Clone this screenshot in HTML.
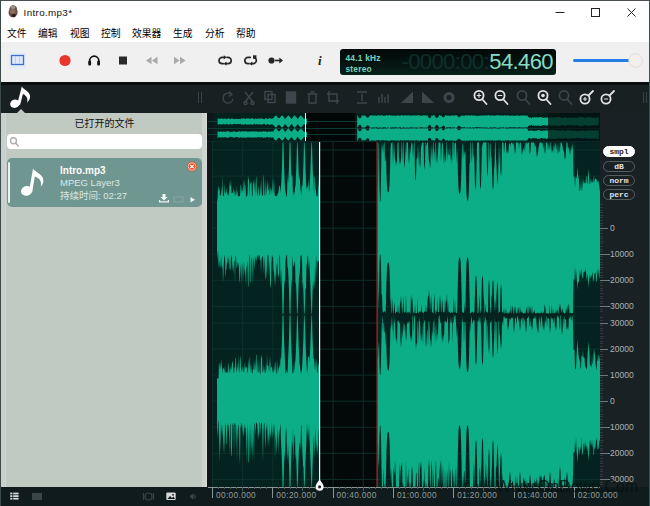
<!DOCTYPE html>
<html lang="zh-CN">
<head>
<meta charset="utf-8">
<title>Intro.mp3*</title>
<style>
*{box-sizing:border-box;margin:0;padding:0}
html,body{width:650px;height:506px;overflow:hidden;background:#fff}
body{position:relative;font-family:"Liberation Sans","Noto Sans CJK SC",sans-serif;font-size:10px;color:#000}
.abs{position:absolute}
#win{position:absolute;left:0;top:0;width:650px;height:506px;overflow:hidden;background:#fff}
#bt{position:absolute;left:0;top:0;width:650px;height:1px;background:#4a4f52;z-index:50}
#bl{position:absolute;left:0;top:0;width:1px;height:506px;background:#3a4a48;z-index:50}
#br{position:absolute;left:649px;top:0;width:1px;height:506px;background:#2c5a58;z-index:50}
#title{position:absolute;left:0;top:1px;width:650px;height:24px;background:#fff}
#title .t{position:absolute;left:23.6px;top:5px;font-size:9.8px;line-height:13px;color:#111;white-space:nowrap;letter-spacing:0.35px}
#menu{position:absolute;left:0;top:25px;width:650px;height:17px;background:#fff}
#menu span{position:absolute;top:2px;font-size:9.8px;line-height:13px;white-space:nowrap;color:#000}
#tb{position:absolute;left:0;top:42px;width:650px;height:40px;background:#f0f0f0}
#dark{position:absolute;left:0;top:82px;width:650px;height:31px;background:#192022}
#panel{position:absolute;left:1px;top:113px;width:207px;height:374px;background:#c1c9c3}
#panel .hd{position:absolute;left:0;top:4px;width:207px;text-align:center;font-size:10px;line-height:13px;color:#111}
#search{position:absolute;left:6px;top:21px;width:195px;height:15px;background:#fff;border-radius:4px}
#item{position:absolute;left:6px;top:45px;width:195px;height:49px;background:#6f9691;border-radius:5px}
#item .bar{position:absolute;left:1px;top:4px;width:2px;height:41px;background:#e8f2ee;border-radius:1px}
#item .n{position:absolute;left:53px;top:7px;font-size:10px;font-weight:bold;color:#fff;line-height:12px;white-space:nowrap}
#item .f{position:absolute;left:53px;top:19px;font-size:9.5px;color:#dce8e4;line-height:12px;white-space:nowrap}
#item .d{position:absolute;left:53px;top:32px;font-size:9.5px;color:#dce8e4;line-height:12px;white-space:nowrap}
#pr{position:absolute;left:202px;top:113px;width:5px;height:374px;background:#cdd3cf;border-right:1px solid #d9ddd9}
#pl{position:absolute;left:1px;top:113px;width:5px;height:374px;background:#c8cfcd;border-right:1px solid #cfd5d2}
#wave{position:absolute;left:207px;top:113px;width:393px;height:374px;background:#04211f}
#right{position:absolute;left:600px;top:113px;width:49px;height:374px;background:#1a2124}
#bot{position:absolute;left:0;top:487px;width:650px;height:19px;background:#0f1b1c}
.sl{position:absolute;left:610px;font-size:8.5px;line-height:11px;color:#aab2b2;white-space:nowrap}
.sl.ng{left:607.2px}
.st{position:absolute;left:600px;width:8px;height:1px;background:#6e7878}
.sm{position:absolute;left:600px;height:1px;background:#2f3a3e}
.tt{position:absolute;top:487px;width:1px;height:11px;background:#8a9696}
.tm{position:absolute;top:487px;width:1px;background:#4a5a5a}
.tl{position:absolute;top:489.5px;font-size:8.3px;line-height:11px;color:#8f9b9b;white-space:nowrap;letter-spacing:0.35px}
.pill{position:absolute;left:603px;width:32px;height:11px;border-radius:6px;border:1px solid #555e60;font-family:"Liberation Mono",monospace;font-size:8px;line-height:9px;text-align:center;color:#e0e4e4;font-weight:bold}
.pill.on{background:#fff;color:#222;border-color:#fff}
#disp{position:absolute;left:340px;top:49px;width:216px;height:26px;border-radius:3px;background:linear-gradient(#020807,#08201a);overflow:hidden}
#disp .a{position:absolute;left:5.5px;top:4px;font-size:8.4px;line-height:10px;font-weight:bold;color:#7ad0b8;white-space:nowrap;letter-spacing:0.2px}
#disp .b{position:absolute;left:5.5px;top:14.5px;font-size:8.4px;line-height:10px;font-weight:bold;color:#7ad0b8;white-space:nowrap;letter-spacing:0.2px}
#disp .dim{position:absolute;right:67px;top:1px;font-size:22px;line-height:24px;color:#0f302a;white-space:nowrap;letter-spacing:-0.6px}
#disp .br{position:absolute;right:3px;top:1px;font-size:22px;line-height:24px;color:#86dcc4;white-space:nowrap;letter-spacing:-0.6px}
#wm{position:absolute;left:496px;top:477px;font-size:16px;line-height:20px;color:#061210;white-space:nowrap;letter-spacing:0;opacity:.8;z-index:40}
svg{position:absolute;left:0;top:0;overflow:visible}
</style>
</head>
<body>
<div id="win">
  <div id="title">
    <svg width="24" height="24" viewBox="0 1 24 24"><path d="M10.800 6.200c.9-1.300 3.600-1.400 4.500-.1 1.200.6 1.900 2 1.700 3.400.8 1.500.9 3.600 0 5.200-.9 1.600-2.700 2.600-4.500 2.600-1.700 0-3.300-1.300-3.700-3-.4-1.500-.3-3.200.5-4.500 0-1.400.5-2.800 1.500-3.600z" fill="#6a5248"/><ellipse cx="13" cy="7.300" rx="2.400" ry="1.600" fill="#9a948e"/><ellipse cx="12.800" cy="11.500" rx="2.600" ry="2.400" fill="#8c6c5c"/><ellipse cx="13.700" cy="15.500" rx="2" ry="1.700" fill="#2a1c18"/></svg>
    <div class="t">Intro.mp3*</div>
    <svg width="650" height="24" viewBox="0 0 650 24"><g stroke="#222" stroke-width="1" fill="none"><path d="M555.500 11.500h9"/><rect x="591.500" y="7.500" width="8" height="8"/><path d="M627.500 7.500l8 8M635.500 7.500l-8 8"/></g></svg>
  </div>
  <div id="menu">
    <span style="left:7px">文件</span><span style="left:38px">编辑</span><span style="left:70px">视图</span><span style="left:101px">控制</span><span style="left:132px">效果器</span><span style="left:173px">生成</span><span style="left:205px">分析</span><span style="left:236px">帮助</span>
  </div>
  <div id="tb">
    <svg width="650" height="40" viewBox="0 42 650 40">
      <rect x="9" y="52" width="17" height="17" fill="#e4ecf8"/>
      <rect x="11.500" y="55.500" width="12" height="9" fill="#dfe9fa" stroke="#3b6fd0" stroke-width="1.300"/><path d="M15.500 56v8M19.500 56v8" stroke="#b9cdf0" stroke-width="1"/>
      <circle cx="65" cy="60.500" r="5.600" fill="#e9352a"/>
      <path d="M89.600 64v-3.200a4.600 4.600 0 0 1 9.200 0V64" fill="none" stroke="#111" stroke-width="1.700"/>
      <rect x="88.300" y="60.800" width="2.800" height="4.600" rx="1" fill="#111"/><rect x="97.200" y="60.800" width="2.800" height="4.600" rx="1" fill="#111"/>
      <rect x="119" y="56.500" width="8" height="8" fill="#2a2a2a"/>
      <path d="M151.500 56.800v7.400l-5.500-3.700zM157.500 56.800v7.400l-5.500-3.700z" fill="#a9a9a9"/>
      <path d="M174 56.800v7.400l5.500-3.700zM180 56.800v7.400l5.500-3.700z" fill="#a9a9a9"/>
      <g fill="none" stroke="#262626" stroke-width="1.700" stroke-linecap="round">
        <path d="M224.500 57.300h-2.300a3.200 3.200 0 0 0 0 6.400h1"/><path d="M225.700 63.700h2.300a3.200 3.200 0 0 0 0-6.400h-1"/>
        <path d="M250.300 57.300h-2.300a3.200 3.200 0 0 0 0 6.400h1"/><path d="M251.500 63.700h2.300a3.200 3.200 0 0 0 .8-6"/>
      </g>
      <path d="M223.800 55.200l2.800 2.100-2.800 2.100zM226.400 61.600l-2.800 2.100 2.800 2.100zM252.200 61.600l-2.800 2.100 2.800 2.100z" fill="#262626"/>
      <rect x="253" y="55.300" width="3.400" height="3.400" fill="#262626"/>
      <circle cx="271.500" cy="60.500" r="3.100" fill="#262626"/><path d="M275 60.500h6.500" stroke="#262626" stroke-width="1.600" fill="none"/><path d="M279.300 57.600l3.700 2.900-3.700 2.900z" fill="#262626"/>
      <path d="M574.500 60.500h55" stroke="#247de6" stroke-width="2.900" stroke-linecap="round"/>
      <circle cx="635.600" cy="60.500" r="6.800" fill="#f3efec" stroke="#e2deda" stroke-width="1"/>
    </svg>
    <div class="abs" style="left:318px;top:11px;font-family:'Liberation Serif',serif;font-style:italic;font-weight:bold;font-size:13px;line-height:15px;color:#222">i</div>
  </div>
  <div id="disp"><div class="a">44.1 kHz</div><div class="b">stereo</div><div class="dim">-0000:00:</div><div class="br">54.460</div></div>

  <div id="dark">
    <svg width="650" height="31" viewBox="0 82 650 31">
      <rect x="0" y="82" width="650" height="3" fill="#080d0d"/>
      <!-- note icon -->
      <g fill="#fff"><ellipse cx="14.900" cy="103.700" rx="4.800" ry="4.100" transform="rotate(-18 14.900 103.700)"/><path d="M21.800 86.400C23.800 89.700 29.600 91 30.100 96C30.300 98.400 29.100 100.600 27.100 102.700C27.900 99.700 27.300 97.200 25.500 95.700C24.500 94.800 23.500 94.300 22.900 94.100L20.100 105L17.300 103.800Z"/></g>
      <path d="M17 113l4-4 4 4z" fill="#c1c9c3"/>
      <g stroke="#3a4448" stroke-width="1"><path d="M198.500 92v11M201.500 92v11M643.500 92v11M646.500 92v11"/></g>
      <g fill="none" stroke="#3d474b" stroke-width="1.400">
        <path d="M231.500 94.500a5 5 0 1 0 1.500 4.500"/><path d="M229 91.500l3 3-3.500 2" />
        <path d="M245 92l8 10M253 92l-8 10"/><circle cx="245.500" cy="103" r="1.500"/><circle cx="252.500" cy="103" r="1.500"/>
        <rect x="265" y="91.500" width="7" height="8"/><rect x="268" y="94.500" width="7" height="8"/>
        <rect x="286.500" y="92" width="9" height="11" fill="#3d474b"/>
        <path d="M307.500 94h10M309 94v9h7v-9M310.500 92h4"/>
        <path d="M329 91v10h10M327 94h10v10"/>
        <path d="M357 92h10M357 103h10M362 94v7"/>
        <path d="M379 103v-6M382 103v-9M385 103v-6M388 103v-9"/>
      </g>
      <path d="M401 103h12V91.500z" fill="#3d474b"/>
      <path d="M422 91.500V103h12z" fill="#3d474b"/>
      <circle cx="449" cy="97.500" r="5.500" fill="#3d474b"/><circle cx="449" cy="97.500" r="2.500" fill="#182024"/>
      <g fill="none" stroke="#e2e2e2" stroke-width="1.800" stroke-linecap="round">
        <circle cx="479" cy="95.500" r="4.600"/><path d="M482.500 99.500l4 4.500"/>
        <circle cx="500" cy="95.500" r="4.600"/><path d="M503.500 99.500l4 4.500"/>
        <circle cx="543" cy="95.500" r="4.600"/><path d="M546.500 99.500l4 4.500"/>
        <circle cx="585" cy="99" r="4.600"/><path d="M588.500 95.500l4.500-4.500"/>
        <circle cx="606" cy="99" r="4.600"/><path d="M609.500 95.500l4.500-4.500"/>
      </g>
      <g fill="none" stroke="#e2e2e2" stroke-width="1.200"><path d="M476.800 95.500h4.400M479 93.300v4.400M497.800 95.500h4.400M583 99h4M604 99h4M585 97v4"/></g>
      <circle cx="543" cy="95.500" r="1.800" fill="#e2e2e2"/>
      <g fill="none" stroke="#3d474b" stroke-width="1.700" stroke-linecap="round">
        <circle cx="522" cy="95.500" r="4.600"/><path d="M525.500 99.500l4 4.500"/>
        <circle cx="564" cy="95.500" r="4.600"/><path d="M567.500 99.500l4 4.500"/>
      </g>
    </svg>
  </div>

  <div id="panel">
    <div class="hd">已打开的文件</div>
    <div id="search"><svg width="20" height="15" viewBox="0 0 20 15"><circle cx="6.500" cy="6.800" r="3" fill="none" stroke="#b0b0b0" stroke-width="1.400"/><path d="M8.800 9.200l2.600 2.800" stroke="#b0b0b0" stroke-width="1.600" stroke-linecap="round"/></svg></div>
    <div id="item">
      <div class="bar"></div>
      <svg width="195" height="50" viewBox="0 1 195 50">
        <g fill="#fff"><ellipse cx="19.600" cy="33.900" rx="5.700" ry="4.800" transform="rotate(-18 19.600 33.900)"/><path d="M26 11.600C28.400 15.600 35.700 16.900 36.300 23C36.600 25.800 35.500 27.700 33.700 29.600C34.500 26.100 33.900 23.300 31.600 21.500C30.200 20.400 28.700 19.700 27.800 19.500L25.200 35L22.100 33.800Z"/></g>
        <circle cx="185" cy="9.500" r="5" fill="#e4552e"/><circle cx="185" cy="9.500" r="3.800" fill="none" stroke="#f6c8b8" stroke-width="0.900"/>
        <path d="M183.300 7.800l3.400 3.400M186.700 7.800l-3.400 3.400" stroke="#fff" stroke-width="1.200"/>
        <g fill="#eef4f2"><path d="M155.500 37h3v3h2l-3.500 3.500-3.500-3.500h2z"/><path d="M152 43v2.500h10V43h-1.200v1.300h-7.600V43z"/></g>
        <rect x="167" y="40" width="9" height="5" fill="none" stroke="#86a8a3" stroke-width="1"/>
        <path d="M183.500 40l4.500 2.800-4.500 2.800z" fill="#eef4f2"/>
      </svg>
      <div class="n">Intro.mp3</div>
      <div class="f">MPEG Layer3</div>
      <div class="d">持续时间: 02:27</div>
    </div>
  </div>
  <div id="pr"></div><div id="pl"></div>

  <div id="wave">
    <svg width="393" height="374" viewBox="207 113 393 374">
      <defs><clipPath id="cm"><rect x="207" y="141" width="393" height="346"/></clipPath>
      <clipPath id="co"><rect x="207" y="113" width="393" height="28"/></clipPath></defs>
      <!-- overview -->
      <rect x="207" y="113" width="393" height="29" fill="#03201d"/><rect x="207" y="113" width="6" height="29" fill="#0c1618"/>
      <rect x="306" y="113" width="49" height="29" fill="#010707"/>
      <rect x="548" y="113" width="52" height="29" fill="#021512"/>
      <g stroke="#0c3a34" stroke-width="1"><path d="M208 121.500h392M208 128.500h392M208 134.500h392"/></g>
      <g clip-path="url(#co)">
        <path d="M217.6,121.5L217.6,119.1L218.3,118.3L218.9,118.4L219.6,118.9L220.2,118.7L220.9,118.7L221.5,118.5L222.2,118.3L222.8,119.1L223.5,119.2L224.1,118.3L224.8,118.7L225.4,118.4L226.1,119.2L226.7,118.7L227.4,118.4L228.1,118.9L228.7,118.2L229.4,118.2L230.0,119.2L230.7,119.2L231.3,118.6L232.0,118.2L232.6,118.8L233.3,119.0L233.9,118.7L234.6,119.2L235.2,119.0L235.9,118.7L236.5,118.7L237.2,118.9L237.8,118.9L238.5,119.0L239.1,118.7L239.8,118.9L240.4,119.2L241.1,118.3L241.8,118.6L242.4,118.5L243.1,119.0L243.7,118.1L244.4,118.3L245.0,119.1L245.7,118.8L246.3,118.4L247.0,118.4L247.6,118.2L248.3,118.7L248.9,118.3L249.6,118.5L250.2,118.9L250.9,118.6L251.5,118.2L252.2,118.3L252.8,118.6L253.5,118.6L254.2,119.2L254.8,118.9L255.5,118.3L256.1,118.7L256.8,119.0L257.4,118.6L258.1,118.4L258.7,118.5L259.4,118.8L260.0,118.7L260.7,118.6L261.3,118.3L262.0,118.6L262.6,118.8L263.3,118.7L263.9,119.2L264.6,119.2L265.2,118.4L265.9,118.1L266.5,118.5L267.2,118.8L267.9,119.0L268.5,118.6L269.2,118.1L269.8,118.4L270.5,118.6L271.1,118.3L271.8,118.9L272.4,118.6L273.1,118.2L273.7,117.6L274.4,116.9L275.0,116.1L275.7,115.4L276.3,115.8L277.0,116.5L277.6,117.3L278.3,118.0L278.9,118.2L279.6,118.0L280.2,117.3L280.9,116.5L281.6,115.8L282.2,115.4L282.9,116.1L283.5,116.9L284.2,117.6L284.8,119.0L285.5,118.6L286.1,117.8L286.8,117.0L287.4,116.2L288.1,115.5L288.7,115.6L289.4,116.4L290.0,117.1L290.7,117.9L291.3,118.9L292.0,119.0L292.6,117.5L293.3,116.7L294.0,116.0L294.6,115.2L295.3,116.0L295.9,116.7L296.6,117.5L297.2,118.5L297.9,119.1L298.5,117.9L299.2,117.1L299.8,116.4L300.5,115.6L301.1,115.5L301.8,116.2L302.4,117.0L303.1,117.8L303.7,119.0L304.4,118.6L305.0,119.0L305.7,118.9L306.4,118.4L307.0,118.7L307.0,121.5L307.0,124.3L306.4,124.6L305.7,124.1L305.0,124.0L304.4,124.4L303.7,124.0L303.1,125.2L302.4,126.0L301.8,126.8L301.1,127.5L300.5,127.4L299.8,126.6L299.2,125.9L298.5,125.1L297.9,123.9L297.2,124.5L296.6,125.5L295.9,126.3L295.3,127.0L294.6,127.8L294.0,127.0L293.3,126.3L292.6,125.5L292.0,124.0L291.3,124.1L290.7,125.1L290.0,125.9L289.4,126.6L288.7,127.4L288.1,127.5L287.4,126.8L286.8,126.0L286.1,125.2L285.5,124.4L284.8,124.0L284.2,125.4L283.5,126.1L282.9,126.9L282.2,127.6L281.6,127.2L280.9,126.5L280.2,125.7L279.6,125.0L278.9,124.8L278.3,125.0L277.6,125.7L277.0,126.5L276.3,127.2L275.7,127.6L275.0,126.9L274.4,126.1L273.7,125.4L273.1,124.8L272.4,124.4L271.8,124.1L271.1,124.7L270.5,124.4L269.8,124.6L269.2,124.9L268.5,124.4L267.9,124.0L267.2,124.2L266.5,124.5L265.9,124.9L265.2,124.6L264.6,123.8L263.9,123.8L263.3,124.3L262.6,124.2L262.0,124.4L261.3,124.7L260.7,124.4L260.0,124.3L259.4,124.2L258.7,124.5L258.1,124.6L257.4,124.4L256.8,124.0L256.1,124.3L255.5,124.7L254.8,124.1L254.2,123.8L253.5,124.4L252.8,124.4L252.2,124.7L251.5,124.8L250.9,124.4L250.2,124.1L249.6,124.5L248.9,124.7L248.3,124.3L247.6,124.8L247.0,124.6L246.3,124.6L245.7,124.2L245.0,123.9L244.4,124.7L243.7,124.9L243.1,124.0L242.4,124.5L241.8,124.4L241.1,124.7L240.4,123.8L239.8,124.1L239.1,124.3L238.5,124.0L237.8,124.1L237.2,124.1L236.5,124.3L235.9,124.3L235.2,124.0L234.6,123.8L233.9,124.3L233.3,124.0L232.6,124.2L232.0,124.8L231.3,124.4L230.7,123.8L230.0,123.8L229.4,124.8L228.7,124.8L228.1,124.1L227.4,124.6L226.7,124.3L226.1,123.8L225.4,124.6L224.8,124.3L224.1,124.7L223.5,123.8L222.8,123.9L222.2,124.7L221.5,124.5L220.9,124.3L220.2,124.3L219.6,124.1L218.9,124.6L218.3,124.7L217.6,123.9Z M357.2,121.5L357.2,115.6L357.9,115.5L358.5,117.5L359.2,118.0L359.9,118.5L360.5,118.0L361.2,117.5L361.8,115.2L362.5,115.5L363.1,115.7L363.8,115.4L364.4,115.2L365.1,115.9L365.7,115.9L366.4,117.0L367.0,117.5L367.7,118.0L368.3,117.5L369.0,117.0L369.6,115.5L370.3,115.7L370.9,115.1L371.6,115.3L372.3,115.5L372.9,115.7L373.6,115.4L374.2,115.6L374.9,115.4L375.5,115.6L376.2,115.4L376.8,115.9L377.5,115.7L378.1,115.1L378.8,115.2L379.4,115.7L380.1,115.2L380.7,115.7L381.4,115.1L382.0,115.3L382.7,115.6L383.3,115.7L384.0,115.9L384.6,115.2L385.3,115.9L386.0,115.2L386.6,115.1L387.3,115.4L387.9,115.8L388.6,115.2L389.2,115.1L389.9,115.3L390.5,115.5L391.2,115.6L391.8,115.6L392.5,115.7L393.1,115.4L393.8,115.6L394.4,115.7L395.1,115.8L395.7,115.4L396.4,115.7L397.0,115.5L397.7,115.6L398.4,115.2L399.0,115.2L399.7,115.9L400.3,115.7L401.0,115.6L401.6,115.1L402.3,115.3L402.9,115.6L403.6,115.7L404.2,115.4L404.9,115.2L405.5,115.2L406.2,115.6L406.8,115.2L407.5,115.4L408.1,115.5L408.8,115.1L409.4,115.7L410.1,115.3L410.8,115.8L411.4,115.8L412.1,115.2L412.7,115.7L413.4,115.3L414.0,115.4L414.7,115.2L415.3,115.6L416.0,115.6L416.6,115.7L417.3,115.2L417.9,115.4L418.6,115.1L419.2,115.2L419.9,115.8L420.5,115.5L421.2,115.8L421.8,115.9L422.5,115.8L423.1,115.2L423.8,115.3L424.5,115.2L425.1,115.6L425.8,115.4L426.4,115.3L427.1,115.6L427.7,115.4L428.4,117.4L429.0,117.9L429.7,118.2L430.3,117.7L431.0,117.2L431.6,115.2L432.3,115.5L432.9,115.7L433.6,115.3L434.2,115.2L434.9,115.9L435.5,117.3L436.2,117.8L436.9,118.3L437.5,117.8L438.2,117.3L438.8,115.7L439.5,115.1L440.1,115.6L440.8,115.8L441.4,115.8L442.1,116.5L442.7,117.0L443.4,117.5L444.0,117.0L444.7,116.5L445.3,115.1L446.0,115.2L446.6,115.7L447.3,115.7L447.9,115.5L448.6,115.8L449.2,115.4L449.9,115.9L450.6,115.9L451.2,115.1L451.9,115.7L452.5,115.4L453.2,115.5L453.8,115.6L454.5,115.8L455.1,115.2L455.8,115.1L456.4,115.1L457.1,115.8L457.7,116.5L458.4,117.0L459.0,117.5L459.7,117.0L460.3,116.5L461.0,115.4L461.6,115.7L462.3,115.5L462.9,115.7L463.6,115.7L464.3,115.8L464.9,115.7L465.6,115.1L466.2,115.5L466.9,115.4L467.5,115.4L468.2,115.1L468.8,115.6L469.5,115.7L470.1,115.6L470.8,115.6L471.4,115.2L472.1,115.2L472.7,115.7L473.4,115.6L474.0,115.5L474.7,115.4L475.3,115.4L476.0,115.7L476.7,115.9L477.3,115.7L478.0,115.8L478.6,115.5L479.3,115.8L479.9,115.8L480.6,115.4L481.2,115.7L481.9,115.3L482.5,115.5L483.2,115.2L483.8,115.8L484.5,115.5L485.1,115.3L485.8,115.8L486.4,115.1L487.1,115.8L487.7,115.3L488.4,115.1L489.1,115.2L489.7,115.6L490.4,115.8L491.0,115.5L491.7,115.2L492.3,115.7L493.0,115.2L493.6,115.8L494.3,115.2L494.9,115.9L495.6,115.6L496.2,115.2L496.9,115.3L497.5,115.2L498.2,115.2L498.8,115.3L499.5,115.3L500.1,115.8L500.8,115.6L501.4,115.8L502.1,115.3L502.8,115.4L503.4,115.7L504.1,115.8L504.7,115.1L505.4,115.3L506.0,115.5L506.7,115.5L507.3,115.2L508.0,115.5L508.6,115.6L509.3,115.6L509.9,115.7L510.6,115.9L511.2,115.4L511.9,115.6L512.5,115.4L513.2,115.9L513.8,115.6L514.5,115.8L515.1,115.8L515.8,115.7L516.5,115.2L517.1,115.6L517.8,115.6L518.4,115.4L519.1,115.7L519.7,115.9L520.4,115.5L521.0,115.5L521.7,115.4L522.3,115.5L523.0,115.4L523.6,115.3L524.3,115.7L524.9,115.5L525.6,115.5L526.2,115.7L526.9,115.6L527.5,115.5L528.2,116.9L528.9,116.9L529.5,117.9L530.2,117.3L530.8,118.2L531.5,118.2L532.1,117.5L532.8,117.0L533.4,118.1L534.1,117.2L534.7,117.0L535.4,117.8L536.0,117.3L536.7,117.0L537.3,117.7L538.0,117.2L538.6,117.2L539.3,117.4L539.9,117.0L540.6,117.0L541.2,116.9L541.9,117.4L542.6,118.0L543.2,117.9L543.9,118.0L544.5,117.4L545.2,117.2L545.8,118.2L546.5,117.3L547.1,117.2L547.8,117.8L548.4,117.5L549.1,118.1L549.7,117.2L550.4,118.2L551.0,116.8L551.7,117.1L552.3,117.4L553.0,117.9L553.6,116.9L554.3,116.9L555.0,118.1L555.6,117.1L556.3,117.0L556.9,117.3L557.6,117.2L558.2,117.6L558.9,116.9L559.5,116.8L560.2,117.7L560.8,117.1L561.5,117.7L562.1,118.1L562.8,117.8L563.4,118.1L564.1,116.9L564.7,116.9L565.4,118.1L566.0,117.4L566.7,117.7L567.3,118.1L568.0,117.9L568.7,117.9L569.3,117.2L570.0,118.3L570.6,118.0L571.3,117.6L571.9,118.3L572.6,117.4L573.2,117.4L573.9,117.0L574.5,118.0L575.2,117.9L575.8,117.5L576.5,117.9L577.1,117.4L577.8,117.9L578.4,117.3L579.1,117.1L579.7,117.1L580.4,116.8L581.1,117.5L581.7,117.6L582.4,117.0L583.0,117.1L583.7,117.4L584.3,117.7L585.0,117.9L585.6,118.1L586.3,117.1L586.9,118.1L587.6,117.2L588.2,117.5L588.9,116.9L589.5,117.2L590.2,116.8L590.8,118.1L591.5,117.5L592.1,117.4L592.8,117.8L593.5,117.5L594.1,117.8L594.8,117.5L595.4,118.3L596.1,117.6L596.7,117.6L597.4,117.8L598.0,117.7L598.7,117.1L598.7,121.5L598.7,125.9L598.0,125.3L597.4,125.2L596.7,125.4L596.1,125.4L595.4,124.7L594.8,125.5L594.1,125.2L593.5,125.5L592.8,125.2L592.1,125.6L591.5,125.5L590.8,124.9L590.2,126.2L589.5,125.8L588.9,126.1L588.2,125.5L587.6,125.8L586.9,124.9L586.3,125.9L585.6,124.9L585.0,125.1L584.3,125.3L583.7,125.6L583.0,125.9L582.4,126.0L581.7,125.4L581.1,125.5L580.4,126.2L579.7,125.9L579.1,125.9L578.4,125.7L577.8,125.1L577.1,125.6L576.5,125.1L575.8,125.5L575.2,125.1L574.5,125.0L573.9,126.0L573.2,125.6L572.6,125.6L571.9,124.7L571.3,125.4L570.6,125.0L570.0,124.7L569.3,125.8L568.7,125.1L568.0,125.1L567.3,124.9L566.7,125.3L566.0,125.6L565.4,124.9L564.7,126.1L564.1,126.1L563.4,124.9L562.8,125.2L562.1,124.9L561.5,125.3L560.8,125.9L560.2,125.3L559.5,126.2L558.9,126.1L558.2,125.4L557.6,125.8L556.9,125.7L556.3,126.0L555.6,125.9L555.0,124.9L554.3,126.1L553.6,126.1L553.0,125.1L552.3,125.6L551.7,125.9L551.0,126.2L550.4,124.8L549.7,125.8L549.1,124.9L548.4,125.5L547.8,125.2L547.1,125.8L546.5,125.7L545.8,124.8L545.2,125.8L544.5,125.6L543.9,125.0L543.2,125.1L542.6,125.0L541.9,125.6L541.2,126.1L540.6,126.0L539.9,126.0L539.3,125.6L538.6,125.8L538.0,125.8L537.3,125.3L536.7,126.0L536.0,125.7L535.4,125.2L534.7,126.0L534.1,125.8L533.4,124.9L532.8,126.0L532.1,125.5L531.5,124.8L530.8,124.8L530.2,125.7L529.5,125.1L528.9,126.1L528.2,126.1L527.5,127.5L526.9,127.4L526.2,127.3L525.6,127.5L524.9,127.5L524.3,127.3L523.6,127.7L523.0,127.6L522.3,127.5L521.7,127.6L521.0,127.5L520.4,127.5L519.7,127.1L519.1,127.3L518.4,127.6L517.8,127.4L517.1,127.4L516.5,127.8L515.8,127.3L515.1,127.2L514.5,127.2L513.8,127.4L513.2,127.1L512.5,127.6L511.9,127.4L511.2,127.6L510.6,127.1L509.9,127.3L509.3,127.4L508.6,127.4L508.0,127.5L507.3,127.8L506.7,127.5L506.0,127.5L505.4,127.7L504.7,127.9L504.1,127.2L503.4,127.3L502.8,127.6L502.1,127.7L501.4,127.2L500.8,127.4L500.1,127.2L499.5,127.7L498.8,127.7L498.2,127.8L497.5,127.8L496.9,127.7L496.2,127.8L495.6,127.4L494.9,127.1L494.3,127.8L493.6,127.2L493.0,127.8L492.3,127.3L491.7,127.8L491.0,127.5L490.4,127.2L489.7,127.4L489.1,127.8L488.4,127.9L487.7,127.7L487.1,127.2L486.4,127.9L485.8,127.2L485.1,127.7L484.5,127.5L483.8,127.2L483.2,127.8L482.5,127.5L481.9,127.7L481.2,127.3L480.6,127.6L479.9,127.2L479.3,127.2L478.6,127.5L478.0,127.2L477.3,127.3L476.7,127.1L476.0,127.3L475.3,127.6L474.7,127.6L474.0,127.5L473.4,127.4L472.7,127.3L472.1,127.8L471.4,127.8L470.8,127.4L470.1,127.4L469.5,127.3L468.8,127.4L468.2,127.9L467.5,127.6L466.9,127.6L466.2,127.5L465.6,127.9L464.9,127.3L464.3,127.2L463.6,127.3L462.9,127.3L462.3,127.5L461.6,127.3L461.0,127.6L460.3,126.5L459.7,126.0L459.0,125.5L458.4,126.0L457.7,126.5L457.1,127.2L456.4,127.9L455.8,127.9L455.1,127.8L454.5,127.2L453.8,127.4L453.2,127.5L452.5,127.6L451.9,127.3L451.2,127.9L450.6,127.1L449.9,127.1L449.2,127.6L448.6,127.2L447.9,127.5L447.3,127.3L446.6,127.3L446.0,127.8L445.3,127.9L444.7,126.5L444.0,126.0L443.4,125.5L442.7,126.0L442.1,126.5L441.4,127.2L440.8,127.2L440.1,127.4L439.5,127.9L438.8,127.3L438.2,125.7L437.5,125.2L436.9,124.7L436.2,125.2L435.5,125.7L434.9,127.1L434.2,127.8L433.6,127.7L432.9,127.3L432.3,127.5L431.6,127.8L431.0,125.8L430.3,125.3L429.7,124.8L429.0,125.1L428.4,125.6L427.7,127.6L427.1,127.4L426.4,127.7L425.8,127.6L425.1,127.4L424.5,127.8L423.8,127.7L423.1,127.8L422.5,127.2L421.8,127.1L421.2,127.2L420.5,127.5L419.9,127.2L419.2,127.8L418.6,127.9L417.9,127.6L417.3,127.8L416.6,127.3L416.0,127.4L415.3,127.4L414.7,127.8L414.0,127.6L413.4,127.7L412.7,127.3L412.1,127.8L411.4,127.2L410.8,127.2L410.1,127.7L409.4,127.3L408.8,127.9L408.1,127.5L407.5,127.6L406.8,127.8L406.2,127.4L405.5,127.8L404.9,127.8L404.2,127.6L403.6,127.3L402.9,127.4L402.3,127.7L401.6,127.9L401.0,127.4L400.3,127.3L399.7,127.1L399.0,127.8L398.4,127.8L397.7,127.4L397.0,127.5L396.4,127.3L395.7,127.6L395.1,127.2L394.4,127.3L393.8,127.4L393.1,127.6L392.5,127.3L391.8,127.4L391.2,127.4L390.5,127.5L389.9,127.7L389.2,127.9L388.6,127.8L387.9,127.2L387.3,127.6L386.6,127.9L386.0,127.8L385.3,127.1L384.6,127.8L384.0,127.1L383.3,127.3L382.7,127.4L382.0,127.7L381.4,127.9L380.7,127.3L380.1,127.8L379.4,127.3L378.8,127.8L378.1,127.9L377.5,127.3L376.8,127.1L376.2,127.6L375.5,127.4L374.9,127.6L374.2,127.4L373.6,127.6L372.9,127.3L372.3,127.5L371.6,127.7L370.9,127.9L370.3,127.3L369.6,127.5L369.0,126.0L368.3,125.5L367.7,125.0L367.0,125.5L366.4,126.0L365.7,127.1L365.1,127.1L364.4,127.8L363.8,127.6L363.1,127.3L362.5,127.5L361.8,127.8L361.2,125.5L360.5,125.0L359.9,124.5L359.2,125.0L358.5,125.5L357.9,127.5L357.2,127.4Z" fill="#0bae87"/><path d="M217.6,134.5L217.6,131.1L218.3,131.2L218.9,132.1L219.6,132.1L220.2,131.3L220.9,131.4L221.5,131.5L222.2,131.9L222.8,131.5L223.5,131.5L224.1,131.6L224.8,132.0L225.4,131.7L226.1,131.8L226.7,131.4L227.4,131.1L228.1,131.2L228.7,131.6L229.4,131.7L230.0,131.9L230.7,132.2L231.3,132.2L232.0,131.7L232.6,131.8L233.3,131.8L233.9,131.2L234.6,131.6L235.2,131.6L235.9,131.9L236.5,132.2L237.2,131.8L237.8,132.0L238.5,131.6L239.1,131.1L239.8,131.5L240.4,132.0L241.1,131.2L241.8,131.3L242.4,131.4L243.1,131.2L243.7,131.4L244.4,131.3L245.0,131.8L245.7,131.1L246.3,131.1L247.0,132.0L247.6,131.4L248.3,131.4L248.9,131.7L249.6,131.6L250.2,131.7L250.9,131.2L251.5,131.6L252.2,131.3L252.8,131.8L253.5,131.2L254.2,131.2L254.8,131.7L255.5,131.6L256.1,131.2L256.8,131.4L257.4,131.7L258.1,132.0L258.7,131.8L259.4,131.4L260.0,132.0L260.7,131.2L261.3,131.9L262.0,131.2L262.6,131.9L263.3,131.1L263.9,131.4L264.6,131.6L265.2,131.6L265.9,131.5L266.5,131.6L267.2,131.9L267.9,132.0L268.5,131.6L269.2,131.2L269.8,131.5L270.5,132.1L271.1,131.3L271.8,131.4L272.4,131.2L273.1,132.0L273.7,130.6L274.4,129.8L275.0,129.1L275.7,128.3L276.3,128.8L277.0,129.6L277.6,130.3L278.3,131.1L278.9,131.3L279.6,131.1L280.2,130.3L280.9,129.6L281.6,128.8L282.2,128.3L282.9,129.1L283.5,129.8L284.2,130.6L284.8,131.5L285.5,132.1L286.1,130.8L286.8,130.0L287.4,129.2L288.1,128.5L288.7,128.7L289.4,129.4L290.0,130.2L290.7,130.9L291.3,131.4L292.0,131.8L292.6,130.4L293.3,129.7L294.0,128.9L294.6,128.2L295.3,128.9L295.9,129.7L296.6,130.4L297.2,132.1L297.9,131.8L298.5,130.9L299.2,130.2L299.8,129.4L300.5,128.7L301.1,128.5L301.8,129.2L302.4,130.0L303.1,130.8L303.7,131.7L304.4,132.0L305.0,131.5L305.7,131.9L306.4,132.1L307.0,131.7L307.0,134.5L307.0,137.3L306.4,136.9L305.7,137.1L305.0,137.5L304.4,137.0L303.7,137.3L303.1,138.2L302.4,139.0L301.8,139.8L301.1,140.5L300.5,140.3L299.8,139.6L299.2,138.8L298.5,138.1L297.9,137.2L297.2,136.9L296.6,138.6L295.9,139.3L295.3,140.1L294.6,140.8L294.0,140.1L293.3,139.3L292.6,138.6L292.0,137.2L291.3,137.6L290.7,138.1L290.0,138.8L289.4,139.6L288.7,140.3L288.1,140.5L287.4,139.8L286.8,139.0L286.1,138.2L285.5,136.9L284.8,137.5L284.2,138.4L283.5,139.2L282.9,139.9L282.2,140.7L281.6,140.2L280.9,139.4L280.2,138.7L279.6,137.9L278.9,137.7L278.3,137.9L277.6,138.7L277.0,139.4L276.3,140.2L275.7,140.7L275.0,139.9L274.4,139.2L273.7,138.4L273.1,137.0L272.4,137.8L271.8,137.6L271.1,137.7L270.5,136.9L269.8,137.5L269.2,137.8L268.5,137.4L267.9,137.0L267.2,137.1L266.5,137.4L265.9,137.5L265.2,137.4L264.6,137.4L263.9,137.6L263.3,137.9L262.6,137.1L262.0,137.8L261.3,137.1L260.7,137.8L260.0,137.0L259.4,137.6L258.7,137.2L258.1,137.0L257.4,137.3L256.8,137.6L256.1,137.8L255.5,137.4L254.8,137.3L254.2,137.8L253.5,137.8L252.8,137.2L252.2,137.7L251.5,137.4L250.9,137.8L250.2,137.3L249.6,137.4L248.9,137.3L248.3,137.6L247.6,137.6L247.0,137.0L246.3,137.9L245.7,137.9L245.0,137.2L244.4,137.7L243.7,137.6L243.1,137.8L242.4,137.6L241.8,137.7L241.1,137.8L240.4,137.0L239.8,137.5L239.1,137.9L238.5,137.4L237.8,137.0L237.2,137.2L236.5,136.8L235.9,137.1L235.2,137.4L234.6,137.4L233.9,137.8L233.3,137.2L232.6,137.2L232.0,137.3L231.3,136.8L230.7,136.8L230.0,137.1L229.4,137.3L228.7,137.4L228.1,137.8L227.4,137.9L226.7,137.6L226.1,137.2L225.4,137.3L224.8,137.0L224.1,137.4L223.5,137.5L222.8,137.5L222.2,137.1L221.5,137.5L220.9,137.6L220.2,137.7L219.6,136.9L218.9,136.9L218.3,137.8L217.6,137.9Z M357.2,134.5L357.2,128.2L357.9,128.8L358.5,130.5L359.2,131.0L359.9,131.5L360.5,131.0L361.2,130.5L361.8,128.7L362.5,128.4L363.1,128.6L363.8,128.9L364.4,128.5L365.1,128.8L365.7,128.9L366.4,130.0L367.0,130.5L367.7,131.0L368.3,130.5L369.0,130.0L369.6,128.1L370.3,128.2L370.9,128.1L371.6,128.7L372.3,128.5L372.9,128.7L373.6,128.4L374.2,128.4L374.9,128.3L375.5,128.3L376.2,128.7L376.8,128.6L377.5,128.5L378.1,128.9L378.8,128.9L379.4,128.6L380.1,128.8L380.7,128.3L381.4,128.7L382.0,128.8L382.7,128.8L383.3,128.7L384.0,128.7L384.6,128.5L385.3,128.5L386.0,128.7L386.6,128.4L387.3,128.7L387.9,128.2L388.6,128.1L389.2,128.3L389.9,128.6L390.5,128.5L391.2,128.4L391.8,128.9L392.5,128.6L393.1,128.5L393.8,128.8L394.4,128.8L395.1,128.3L395.7,128.6L396.4,128.5L397.0,128.2L397.7,128.4L398.4,128.7L399.0,128.1L399.7,128.6L400.3,128.9L401.0,128.4L401.6,128.8L402.3,128.7L402.9,128.2L403.6,128.4L404.2,128.9L404.9,128.5L405.5,128.6L406.2,128.5L406.8,128.7L407.5,128.4L408.1,128.8L408.8,128.7L409.4,128.6L410.1,128.2L410.8,128.8L411.4,128.3L412.1,128.7L412.7,128.4L413.4,128.6L414.0,128.5L414.7,128.3L415.3,128.6L416.0,128.8L416.6,128.8L417.3,128.8L417.9,128.2L418.6,128.4L419.2,128.1L419.9,128.3L420.5,128.9L421.2,128.4L421.8,128.3L422.5,128.3L423.1,128.5L423.8,128.6L424.5,128.5L425.1,128.3L425.8,128.7L426.4,128.5L427.1,128.5L427.7,128.1L428.4,130.4L429.0,130.9L429.7,131.2L430.3,130.7L431.0,130.2L431.6,128.5L432.3,128.7L432.9,128.6L433.6,128.4L434.2,128.2L434.9,128.4L435.5,130.3L436.2,130.8L436.9,131.3L437.5,130.8L438.2,130.3L438.8,128.6L439.5,128.8L440.1,128.8L440.8,128.2L441.4,128.1L442.1,129.5L442.7,130.0L443.4,130.5L444.0,130.0L444.7,129.5L445.3,128.4L446.0,128.5L446.6,128.5L447.3,128.8L447.9,128.5L448.6,128.1L449.2,128.3L449.9,128.8L450.6,128.5L451.2,128.3L451.9,128.7L452.5,128.2L453.2,128.5L453.8,128.3L454.5,128.6L455.1,128.1L455.8,128.3L456.4,128.4L457.1,128.8L457.7,129.5L458.4,130.0L459.0,130.5L459.7,130.0L460.3,129.5L461.0,128.5L461.6,128.5L462.3,128.6L462.9,128.3L463.6,128.2L464.3,128.3L464.9,128.5L465.6,128.1L466.2,128.6L466.9,128.3L467.5,128.4L468.2,128.3L468.8,128.2L469.5,128.7L470.1,128.4L470.8,128.6L471.4,128.4L472.1,128.1L472.7,128.4L473.4,128.9L474.0,128.5L474.7,128.3L475.3,128.2L476.0,128.4L476.7,128.2L477.3,128.9L478.0,128.1L478.6,128.3L479.3,128.4L479.9,128.2L480.6,128.2L481.2,128.8L481.9,128.2L482.5,128.3L483.2,128.7L483.8,128.3L484.5,128.4L485.1,128.7L485.8,128.3L486.4,128.8L487.1,128.4L487.7,128.6L488.4,128.7L489.1,128.4L489.7,128.5L490.4,128.7L491.0,128.1L491.7,128.8L492.3,128.9L493.0,128.5L493.6,128.2L494.3,128.4L494.9,128.3L495.6,128.5L496.2,128.4L496.9,128.6L497.5,128.7L498.2,128.5L498.8,128.9L499.5,128.8L500.1,128.3L500.8,128.8L501.4,128.3L502.1,128.3L502.8,128.6L503.4,128.4L504.1,128.3L504.7,128.2L505.4,128.8L506.0,128.8L506.7,128.6L507.3,128.5L508.0,128.7L508.6,128.9L509.3,128.5L509.9,128.1L510.6,128.6L511.2,128.5L511.9,128.6L512.5,128.5L513.2,128.2L513.8,128.7L514.5,128.4L515.1,128.5L515.8,128.5L516.5,128.2L517.1,128.8L517.8,128.2L518.4,128.7L519.1,128.4L519.7,128.3L520.4,128.4L521.0,128.6L521.7,128.2L522.3,128.8L523.0,128.4L523.6,128.6L524.3,128.5L524.9,128.2L525.6,128.3L526.2,128.4L526.9,128.7L527.5,128.7L528.2,130.6L528.9,131.0L529.5,130.9L530.2,129.9L530.8,131.1L531.5,130.1L532.1,130.7L532.8,130.8L533.4,130.8L534.1,131.2L534.7,130.6L535.4,131.1L536.0,130.6L536.7,130.9L537.3,130.0L538.0,129.9L538.6,130.6L539.3,130.3L539.9,129.9L540.6,130.8L541.2,131.2L541.9,130.9L542.6,131.0L543.2,130.3L543.9,130.7L544.5,130.8L545.2,130.1L545.8,131.0L546.5,130.1L547.1,130.4L547.8,130.7L548.4,130.1L549.1,130.8L549.7,130.0L550.4,129.9L551.0,130.5L551.7,130.3L552.3,129.9L553.0,130.2L553.6,130.2L554.3,130.0L555.0,129.9L555.6,130.2L556.3,129.8L556.9,130.9L557.6,130.4L558.2,130.3L558.9,130.7L559.5,130.7L560.2,131.0L560.8,129.9L561.5,130.8L562.1,130.6L562.8,130.0L563.4,131.0L564.1,129.9L564.7,131.1L565.4,131.3L566.0,130.8L566.7,130.8L567.3,129.9L568.0,130.0L568.7,130.2L569.3,130.6L570.0,130.5L570.6,130.9L571.3,130.0L571.9,130.7L572.6,130.9L573.2,130.3L573.9,131.1L574.5,130.8L575.2,129.9L575.8,131.2L576.5,131.1L577.1,131.0L577.8,130.9L578.4,130.7L579.1,130.9L579.7,130.8L580.4,130.9L581.1,130.9L581.7,130.4L582.4,130.8L583.0,130.7L583.7,130.1L584.3,131.2L585.0,131.1L585.6,130.0L586.3,130.7L586.9,130.1L587.6,131.1L588.2,130.5L588.9,130.0L589.5,130.8L590.2,130.1L590.8,130.4L591.5,130.7L592.1,129.8L592.8,130.7L593.5,130.6L594.1,130.4L594.8,130.8L595.4,130.0L596.1,130.4L596.7,130.4L597.4,130.5L598.0,129.8L598.7,129.8L598.7,134.5L598.7,139.2L598.0,139.2L597.4,138.5L596.7,138.6L596.1,138.6L595.4,139.0L594.8,138.2L594.1,138.6L593.5,138.4L592.8,138.3L592.1,139.2L591.5,138.3L590.8,138.6L590.2,138.9L589.5,138.2L588.9,139.0L588.2,138.5L587.6,137.9L586.9,138.9L586.3,138.3L585.6,139.0L585.0,137.9L584.3,137.8L583.7,138.9L583.0,138.3L582.4,138.2L581.7,138.6L581.1,138.1L580.4,138.1L579.7,138.2L579.1,138.1L578.4,138.3L577.8,138.1L577.1,138.0L576.5,137.9L575.8,137.8L575.2,139.1L574.5,138.2L573.9,137.9L573.2,138.7L572.6,138.1L571.9,138.3L571.3,139.0L570.6,138.1L570.0,138.5L569.3,138.4L568.7,138.8L568.0,139.0L567.3,139.1L566.7,138.2L566.0,138.2L565.4,137.7L564.7,137.9L564.1,139.1L563.4,138.0L562.8,139.0L562.1,138.4L561.5,138.2L560.8,139.1L560.2,138.0L559.5,138.3L558.9,138.3L558.2,138.7L557.6,138.6L556.9,138.1L556.3,139.2L555.6,138.8L555.0,139.1L554.3,139.0L553.6,138.8L553.0,138.8L552.3,139.1L551.7,138.7L551.0,138.5L550.4,139.1L549.7,139.0L549.1,138.2L548.4,138.9L547.8,138.3L547.1,138.6L546.5,138.9L545.8,138.0L545.2,138.9L544.5,138.2L543.9,138.3L543.2,138.7L542.6,138.0L541.9,138.1L541.2,137.8L540.6,138.2L539.9,139.1L539.3,138.7L538.6,138.4L538.0,139.1L537.3,139.0L536.7,138.1L536.0,138.4L535.4,137.9L534.7,138.4L534.1,137.8L533.4,138.2L532.8,138.2L532.1,138.3L531.5,138.9L530.8,137.9L530.2,139.1L529.5,138.1L528.9,138.0L528.2,138.4L527.5,140.3L526.9,140.3L526.2,140.6L525.6,140.7L524.9,140.8L524.3,140.5L523.6,140.4L523.0,140.6L522.3,140.2L521.7,140.8L521.0,140.4L520.4,140.6L519.7,140.7L519.1,140.6L518.4,140.3L517.8,140.8L517.1,140.2L516.5,140.8L515.8,140.5L515.1,140.5L514.5,140.6L513.8,140.3L513.2,140.8L512.5,140.5L511.9,140.4L511.2,140.5L510.6,140.4L509.9,140.9L509.3,140.5L508.6,140.1L508.0,140.3L507.3,140.5L506.7,140.4L506.0,140.2L505.4,140.2L504.7,140.8L504.1,140.7L503.4,140.6L502.8,140.4L502.1,140.7L501.4,140.7L500.8,140.2L500.1,140.7L499.5,140.2L498.8,140.1L498.2,140.5L497.5,140.3L496.9,140.4L496.2,140.6L495.6,140.5L494.9,140.7L494.3,140.6L493.6,140.8L493.0,140.5L492.3,140.1L491.7,140.2L491.0,140.9L490.4,140.3L489.7,140.5L489.1,140.6L488.4,140.3L487.7,140.4L487.1,140.6L486.4,140.2L485.8,140.7L485.1,140.3L484.5,140.6L483.8,140.7L483.2,140.3L482.5,140.7L481.9,140.8L481.2,140.2L480.6,140.8L479.9,140.8L479.3,140.6L478.6,140.7L478.0,140.9L477.3,140.1L476.7,140.8L476.0,140.6L475.3,140.8L474.7,140.7L474.0,140.5L473.4,140.1L472.7,140.6L472.1,140.9L471.4,140.6L470.8,140.4L470.1,140.6L469.5,140.3L468.8,140.8L468.2,140.7L467.5,140.6L466.9,140.7L466.2,140.4L465.6,140.9L464.9,140.5L464.3,140.7L463.6,140.8L462.9,140.7L462.3,140.4L461.6,140.5L461.0,140.5L460.3,139.5L459.7,139.0L459.0,138.5L458.4,139.0L457.7,139.5L457.1,140.2L456.4,140.6L455.8,140.7L455.1,140.9L454.5,140.4L453.8,140.7L453.2,140.5L452.5,140.8L451.9,140.3L451.2,140.7L450.6,140.5L449.9,140.2L449.2,140.7L448.6,140.9L447.9,140.5L447.3,140.2L446.6,140.5L446.0,140.5L445.3,140.6L444.7,139.5L444.0,139.0L443.4,138.5L442.7,139.0L442.1,139.5L441.4,140.9L440.8,140.8L440.1,140.2L439.5,140.2L438.8,140.4L438.2,138.7L437.5,138.2L436.9,137.7L436.2,138.2L435.5,138.7L434.9,140.6L434.2,140.8L433.6,140.6L432.9,140.4L432.3,140.3L431.6,140.5L431.0,138.8L430.3,138.3L429.7,137.8L429.0,138.1L428.4,138.6L427.7,140.9L427.1,140.5L426.4,140.5L425.8,140.3L425.1,140.7L424.5,140.5L423.8,140.4L423.1,140.5L422.5,140.7L421.8,140.7L421.2,140.6L420.5,140.1L419.9,140.7L419.2,140.9L418.6,140.6L417.9,140.8L417.3,140.2L416.6,140.2L416.0,140.2L415.3,140.4L414.7,140.7L414.0,140.5L413.4,140.4L412.7,140.6L412.1,140.3L411.4,140.7L410.8,140.2L410.1,140.8L409.4,140.4L408.8,140.3L408.1,140.2L407.5,140.6L406.8,140.3L406.2,140.5L405.5,140.4L404.9,140.5L404.2,140.1L403.6,140.6L402.9,140.8L402.3,140.3L401.6,140.2L401.0,140.6L400.3,140.1L399.7,140.4L399.0,140.9L398.4,140.3L397.7,140.6L397.0,140.8L396.4,140.5L395.7,140.4L395.1,140.7L394.4,140.2L393.8,140.2L393.1,140.5L392.5,140.4L391.8,140.1L391.2,140.6L390.5,140.5L389.9,140.4L389.2,140.7L388.6,140.9L387.9,140.8L387.3,140.3L386.6,140.6L386.0,140.3L385.3,140.5L384.6,140.5L384.0,140.3L383.3,140.3L382.7,140.2L382.0,140.2L381.4,140.3L380.7,140.7L380.1,140.2L379.4,140.4L378.8,140.1L378.1,140.1L377.5,140.5L376.8,140.4L376.2,140.3L375.5,140.7L374.9,140.7L374.2,140.6L373.6,140.6L372.9,140.3L372.3,140.5L371.6,140.3L370.9,140.9L370.3,140.8L369.6,140.9L369.0,139.0L368.3,138.5L367.7,138.0L367.0,138.5L366.4,139.0L365.7,140.1L365.1,140.2L364.4,140.5L363.8,140.1L363.1,140.4L362.5,140.6L361.8,140.3L361.2,138.5L360.5,138.0L359.9,137.5L359.2,138.0L358.5,138.5L357.9,140.2L357.2,140.8Z" fill="#0bae87"/>
        <rect x="548" y="113" width="52" height="29" fill="#021512" opacity="0.720"/>
      </g>
      <rect x="305" y="113" width="1" height="29" fill="#e8f0ee"/>
      <rect x="207" y="141" width="393" height="1" fill="#0a2a28"/>
      <!-- main -->
      <rect x="207" y="142" width="393" height="345" fill="#04221f"/>
      <rect x="207" y="142" width="6" height="345" fill="#0d1719"/>
      <rect x="320" y="142" width="57" height="345" fill="#020908"/>
      <g clip-path="url(#cm)">
        <g stroke="#0f3631" stroke-width="1" opacity="0.850"><line x1="212.5" y1="141" x2="212.5" y2="487"/><line x1="242.7" y1="141" x2="242.7" y2="487"/><line x1="272.8" y1="141" x2="272.8" y2="487"/><line x1="302.9" y1="141" x2="302.9" y2="487"/><line x1="333.1" y1="141" x2="333.1" y2="487"/><line x1="363.2" y1="141" x2="363.2" y2="487"/><line x1="393.4" y1="141" x2="393.4" y2="487"/><line x1="423.5" y1="141" x2="423.5" y2="487"/><line x1="453.7" y1="141" x2="453.7" y2="487"/><line x1="483.8" y1="141" x2="483.8" y2="487"/><line x1="514.0" y1="141" x2="514.0" y2="487"/><line x1="544.1" y1="141" x2="544.1" y2="487"/><line x1="574.3" y1="141" x2="574.3" y2="487"/><line x1="213" y1="150.0" x2="600" y2="150.0"/><line x1="213" y1="176.1" x2="600" y2="176.1"/><line x1="213" y1="202.1" x2="600" y2="202.1"/><line x1="213" y1="228.2" x2="600" y2="228.2"/><line x1="213" y1="254.3" x2="600" y2="254.3"/><line x1="213" y1="280.3" x2="600" y2="280.3"/><line x1="213" y1="306.4" x2="600" y2="306.4"/><line x1="213" y1="323.0" x2="600" y2="323.0"/><line x1="213" y1="349.1" x2="600" y2="349.1"/><line x1="213" y1="375.1" x2="600" y2="375.1"/><line x1="213" y1="401.2" x2="600" y2="401.2"/><line x1="213" y1="427.3" x2="600" y2="427.3"/><line x1="213" y1="453.3" x2="600" y2="453.3"/><line x1="213" y1="479.4" x2="600" y2="479.4"/></g>
        <path d="M217.0,228.2L217.0,196.6L217.5,202.2L218.0,185.6L218.5,187.1L219.0,191.5L219.5,186.4L220.0,195.5L220.5,195.4L221.0,194.6L221.5,185.4L222.0,195.5L222.5,174.7L223.0,196.4L223.5,195.7L224.0,196.3L224.5,182.8L225.0,193.4L225.5,191.4L226.0,194.1L226.5,187.1L227.0,192.8L227.5,195.5L228.0,192.3L228.5,194.4L229.0,196.2L229.5,180.9L230.0,185.8L230.5,186.3L231.0,178.5L231.5,192.9L232.0,193.2L232.5,192.4L233.0,192.7L233.5,186.2L234.0,196.5L234.5,191.5L235.0,189.9L235.5,193.8L236.0,196.5L236.5,185.1L237.0,196.5L237.5,189.2L238.0,196.0L238.5,196.5L239.0,195.8L239.5,196.4L240.0,196.0L240.5,185.7L241.0,184.3L241.5,193.5L242.0,186.7L242.5,191.3L243.0,190.8L243.5,178.8L244.0,194.3L244.5,179.0L245.0,185.5L245.5,185.7L246.0,196.5L246.5,196.4L247.0,196.5L247.5,193.8L248.0,175.8L248.5,178.8L249.0,180.3L249.5,196.2L250.0,185.0L250.5,182.7L251.0,181.4L251.5,182.0L252.0,196.1L252.5,195.8L253.0,182.0L253.5,183.9L254.0,178.1L254.5,191.9L255.0,178.2L255.5,196.1L256.0,175.4L256.5,178.4L257.0,193.9L257.5,196.4L258.0,189.6L258.5,185.5L259.0,193.7L259.5,196.5L260.0,194.7L260.5,180.8L261.0,196.3L261.5,176.2L262.0,195.1L262.5,195.6L263.0,196.2L263.5,174.3L264.0,177.8L264.5,194.2L265.0,196.3L265.5,186.7L266.0,178.3L266.5,196.5L267.0,187.3L267.5,179.6L268.0,191.7L268.5,189.0L269.0,181.6L269.5,195.2L270.0,194.8L270.5,186.4L271.0,189.5L271.5,189.9L272.0,193.9L272.5,176.2L273.0,194.6L273.5,185.9L274.0,178.0L274.5,192.8L275.0,196.5L275.5,195.4L276.0,196.4L276.5,196.0L277.0,196.2L277.5,193.8L278.0,193.4L278.5,191.9L279.0,186.3L279.5,185.9L280.0,185.6L280.5,193.5L281.0,186.4L281.5,177.6L282.0,164.9L282.5,142.6L283.0,142.6L283.5,142.6L284.0,164.9L284.5,177.6L285.0,188.1L285.5,191.7L286.0,194.5L286.5,196.5L287.0,196.5L287.5,173.7L288.0,183.9L288.5,177.6L289.0,164.9L289.5,142.6L290.0,142.6L290.5,142.6L291.0,164.9L291.5,177.6L292.0,174.2L292.5,176.9L293.0,196.4L293.5,192.6L294.0,191.8L294.5,194.8L295.0,187.7L295.5,186.1L296.0,175.3L296.5,161.9L297.0,142.6L297.5,142.6L298.0,150.4L298.5,167.7L299.0,179.8L299.5,174.5L300.0,181.8L300.5,193.9L301.0,184.2L301.5,196.0L302.0,184.8L302.5,186.1L303.0,175.3L303.5,161.9L304.0,142.6L304.5,142.6L305.0,150.4L305.5,167.7L306.0,179.8L306.5,190.1L307.0,184.2L307.5,188.6L308.0,186.3L308.5,177.8L309.0,191.9L309.5,190.1L310.0,179.8L310.5,167.7L311.0,150.4L311.5,142.6L312.0,142.6L312.5,161.9L313.0,175.3L313.5,176.3L314.0,194.0L314.5,176.5L315.0,177.6L315.5,188.8L316.0,191.2L316.5,196.1L317.0,196.2L317.5,196.5L318.0,187.9L318.5,184.8L319.0,173.7L319.0,228.2L319.0,259.9L318.5,262.0L318.0,261.7L317.5,260.2L317.0,280.6L316.5,262.7L316.0,254.8L315.5,288.7L315.0,264.8L314.5,289.9L314.0,279.7L313.5,290.3L313.0,281.1L312.5,294.5L312.0,313.8L311.5,313.8L311.0,306.0L310.5,288.7L310.0,276.6L309.5,266.3L309.0,258.9L308.5,271.9L308.0,255.2L307.5,256.2L307.0,263.1L306.5,266.3L306.0,288.2L305.5,288.7L305.0,306.0L304.5,313.8L304.0,313.8L303.5,294.5L303.0,281.1L302.5,289.1L302.0,260.7L301.5,254.9L301.0,255.6L300.5,256.3L300.0,269.9L299.5,275.0L299.0,276.6L298.5,288.7L298.0,306.0L297.5,313.8L297.0,313.8L296.5,294.5L296.0,282.4L295.5,284.0L295.0,260.7L294.5,262.7L294.0,267.6L293.5,265.9L293.0,264.0L292.5,254.8L292.0,287.8L291.5,278.8L291.0,291.5L290.5,313.8L290.0,313.8L289.5,313.8L289.0,291.5L288.5,278.8L288.0,268.3L287.5,266.9L287.0,254.7L286.5,255.4L286.0,257.0L285.5,262.1L285.0,284.8L284.5,278.8L284.0,291.5L283.5,313.8L283.0,313.8L282.5,313.8L282.0,291.5L281.5,278.8L281.0,268.3L280.5,287.2L280.0,256.0L279.5,254.9L279.0,281.8L278.5,273.8L278.0,276.5L277.5,257.4L277.0,279.9L276.5,262.8L276.0,269.4L275.5,287.8L275.0,272.6L274.5,285.3L274.0,272.4L273.5,269.9L273.0,256.5L272.5,257.5L272.0,254.7L271.5,262.7L271.0,285.1L270.5,288.4L270.0,280.0L269.5,260.2L269.0,277.2L268.5,255.8L268.0,255.0L267.5,256.6L267.0,269.6L266.5,280.3L266.0,262.4L265.5,279.5L265.0,278.1L264.5,262.5L264.0,256.2L263.5,274.6L263.0,257.9L262.5,256.0L262.0,256.9L261.5,260.9L261.0,273.8L260.5,258.4L260.0,261.0L259.5,255.6L259.0,255.2L258.5,255.5L258.0,260.2L257.5,255.0L257.0,256.6L256.5,263.0L256.0,255.5L255.5,260.9L255.0,256.5L254.5,270.5L254.0,261.9L253.5,256.4L253.0,286.5L252.5,271.6L252.0,257.1L251.5,260.1L251.0,282.8L250.5,281.2L250.0,254.9L249.5,255.8L249.0,286.8L248.5,286.3L248.0,260.4L247.5,264.7L247.0,288.8L246.5,265.0L246.0,268.7L245.5,284.8L245.0,267.7L244.5,274.6L244.0,260.2L243.5,271.5L243.0,281.9L242.5,268.8L242.0,261.9L241.5,287.0L241.0,262.7L240.5,269.4L240.0,279.2L239.5,283.1L239.0,270.8L238.5,261.7L238.0,265.9L237.5,261.5L237.0,269.1L236.5,267.2L236.0,256.3L235.5,255.7L235.0,284.3L234.5,260.4L234.0,261.4L233.5,274.8L233.0,264.1L232.5,271.7L232.0,258.7L231.5,255.0L231.0,256.9L230.5,270.9L230.0,269.0L229.5,268.6L229.0,255.5L228.5,264.9L228.0,256.5L227.5,263.8L227.0,261.8L226.5,268.1L226.0,271.8L225.5,278.3L225.0,255.3L224.5,256.6L224.0,259.8L223.5,274.2L223.0,282.5L222.5,264.4L222.0,268.5L221.5,264.8L221.0,254.8L220.5,266.3L220.0,268.4L219.5,260.0L219.0,268.0L218.5,264.0L218.0,250.3L217.5,260.3L217.0,250.1Z M377.5,228.2L377.5,185.4L378.0,185.4L378.5,144.0L379.0,142.6L379.5,186.9L380.0,201.8L380.5,200.6L381.0,180.8L381.5,142.6L382.0,150.6L382.5,142.6L383.0,153.9L383.5,146.2L384.0,142.6L384.5,142.6L385.0,160.7L385.5,161.2L386.0,155.2L386.5,174.6L387.0,186.0L387.5,191.0L388.0,192.2L388.5,192.2L389.0,190.4L389.5,184.4L390.0,171.3L390.5,148.6L391.0,142.6L391.5,143.6L392.0,142.7L392.5,142.6L393.0,164.6L393.5,142.6L394.0,160.0L394.5,142.6L395.0,159.0L395.5,161.1L396.0,166.6L396.5,161.1L397.0,163.2L397.5,142.6L398.0,142.6L398.5,142.6L399.0,157.5L399.5,165.2L400.0,157.4L400.5,164.0L401.0,160.9L401.5,142.6L402.0,142.6L402.5,162.5L403.0,142.6L403.5,142.6L404.0,162.4L404.5,168.3L405.0,162.4L405.5,142.6L406.0,156.6L406.5,142.6L407.0,142.6L407.5,142.6L408.0,142.6L408.5,157.4L409.0,164.0L409.5,157.4L410.0,145.5L410.5,154.6L411.0,146.0L411.5,142.6L412.0,142.6L412.5,144.4L413.0,158.6L413.5,150.3L414.0,142.6L414.5,142.6L415.0,172.7L415.5,181.0L416.0,178.0L416.5,157.8L417.0,159.3L417.5,156.3L418.0,142.6L418.5,166.0L419.0,142.6L419.5,162.4L420.0,168.3L420.5,163.5L421.0,142.6L421.5,147.6L422.0,142.6L422.5,142.6L423.0,142.9L423.5,142.6L424.0,163.7L424.5,170.0L425.0,163.7L425.5,142.6L426.0,142.6L426.5,146.7L427.0,142.6L427.5,142.6L428.0,142.6L428.5,154.2L429.0,162.0L429.5,162.4L430.0,168.3L430.5,163.7L431.0,142.6L431.5,159.4L432.0,142.6L432.5,161.8L433.0,142.6L433.5,142.6L434.0,153.8L434.5,149.2L435.0,162.8L435.5,142.6L436.0,142.6L436.5,157.4L437.0,164.0L437.5,157.4L438.0,152.5L438.5,142.6L439.0,142.6L439.5,142.6L440.0,142.6L440.5,143.2L441.0,162.4L441.5,150.5L442.0,142.6L442.5,142.6L443.0,146.2L443.5,157.4L444.0,164.0L444.5,157.4L445.0,150.8L445.5,162.4L446.0,159.8L446.5,142.6L447.0,142.6L447.5,161.1L448.0,147.4L448.5,154.3L449.0,155.1L449.5,155.2L450.0,142.6L450.5,155.6L451.0,161.4L451.5,155.6L452.0,165.6L452.5,142.6L453.0,142.6L453.5,142.6L454.0,159.9L454.5,142.6L455.0,143.9L455.5,142.6L456.0,142.6L456.5,163.8L457.0,147.3L457.5,154.9L458.0,176.7L458.5,188.3L459.0,193.0L459.5,194.0L460.0,193.7L460.5,190.9L461.0,182.4L461.5,165.0L462.0,145.5L462.5,142.6L463.0,159.4L463.5,142.6L464.0,157.1L464.5,150.0L465.0,154.2L465.5,150.2L466.0,178.4L466.5,193.5L467.0,199.6L467.5,200.8L468.0,200.5L468.5,196.8L469.0,185.8L469.5,163.3L470.0,162.9L470.5,142.6L471.0,142.6L471.5,157.4L472.0,163.2L472.5,142.6L473.0,142.6L473.5,158.2L474.0,153.1L474.5,165.2L475.0,185.4L475.5,189.7L476.0,185.4L476.5,165.2L477.0,142.6L477.5,142.6L478.0,142.6L478.5,142.6L479.0,142.6L479.5,165.2L480.0,185.4L480.5,189.7L481.0,185.4L481.5,165.2L482.0,142.6L482.5,146.9L483.0,142.6L483.5,142.6L484.0,142.6L484.5,142.6L485.0,142.6L485.5,142.6L486.0,142.6L486.5,142.6L487.0,170.8L487.5,176.8L488.0,170.8L488.5,142.6L489.0,142.6L489.5,165.2L490.0,145.1L490.5,142.6L491.0,159.9L491.5,154.5L492.0,169.4L492.5,186.1L493.0,189.7L493.5,186.1L494.0,169.4L494.5,165.5L495.0,142.6L495.5,142.6L496.0,157.4L496.5,165.4L497.0,177.8L497.5,185.4L498.0,177.8L498.5,162.0L499.0,142.6L499.5,165.2L500.0,142.6L500.5,170.8L501.0,176.8L501.5,170.8L502.0,142.6L502.5,142.6L503.0,142.6L503.5,142.6L504.0,153.1L504.5,148.2L505.0,143.1L505.5,142.6L506.0,142.6L506.5,153.0L507.0,151.8L507.5,150.4L508.0,153.9L508.5,150.4L509.0,142.6L509.5,144.3L510.0,142.6L510.5,146.8L511.0,142.6L511.5,142.6L512.0,142.6L512.5,143.9L513.0,142.6L513.5,146.1L514.0,142.6L514.5,150.4L515.0,153.9L515.5,150.4L516.0,142.6L516.5,142.6L517.0,142.6L517.5,142.6L518.0,142.6L518.5,142.6L519.0,149.3L519.5,142.6L520.0,143.8L520.5,142.6L521.0,142.6L521.5,151.5L522.0,155.4L522.5,151.5L523.0,149.2L523.5,147.5L524.0,152.1L524.5,142.6L525.0,152.7L525.5,142.6L526.0,142.6L526.5,142.6L527.0,144.7L527.5,142.6L528.0,142.7L528.5,142.6L529.0,142.6L529.5,153.2L530.0,153.9L530.5,150.4L531.0,142.6L531.5,142.6L532.0,142.6L532.5,142.6L533.0,142.6L533.5,142.6L534.0,142.6L534.5,144.3L535.0,146.5L535.5,146.4L536.0,143.9L536.5,154.4L537.0,157.0L537.5,154.4L538.0,152.7L538.5,147.8L539.0,145.7L539.5,142.6L540.0,142.6L540.5,142.6L541.0,142.6L541.5,142.6L542.0,143.6L542.5,142.6L543.0,146.5L543.5,149.2L544.0,142.6L544.5,150.4L545.0,153.9L545.5,150.4L546.0,142.6L546.5,142.6L547.0,142.6L547.5,143.3L548.0,150.2L548.5,142.6L549.0,150.7L549.5,142.6L550.0,150.6L550.5,142.6L551.0,142.6L551.5,149.7L552.0,152.9L552.5,149.7L553.0,151.4L553.5,142.6L554.0,153.4L554.5,142.6L555.0,149.2L555.5,142.6L556.0,144.1L556.5,150.7L557.0,142.6L557.5,150.4L558.0,153.9L558.5,150.4L559.0,142.6L559.5,152.5L560.0,150.4L560.5,142.6L561.0,142.6L561.5,142.6L562.0,144.1L562.5,146.0L563.0,149.2L563.5,151.5L564.0,151.0L564.5,157.6L565.0,160.1L565.5,157.6L566.0,149.7L566.5,142.6L567.0,142.6L567.5,142.6L568.0,150.2L568.5,146.8L569.0,148.6L569.5,151.5L570.0,155.4L570.5,151.5L571.0,146.5L571.5,150.9L572.0,142.6L572.5,149.9L573.0,142.6L573.5,176.8L574.0,176.8L574.5,176.8L575.0,188.1L575.5,177.3L576.0,178.0L576.5,178.0L577.0,174.3L577.5,166.6L578.0,174.3L578.5,176.9L579.0,180.0L579.5,191.1L580.0,191.3L580.5,187.4L581.0,178.6L581.5,186.5L582.0,191.4L582.5,184.2L583.0,176.8L583.5,184.5L584.0,180.1L584.5,183.6L585.0,183.0L585.5,183.5L586.0,175.8L586.5,176.4L587.0,183.5L587.5,183.7L588.0,176.0L588.5,168.3L589.0,176.0L589.5,183.7L590.0,184.7L590.5,177.6L591.0,183.7L591.5,178.9L592.0,183.2L592.5,179.9L593.0,183.4L593.5,179.7L594.0,175.1L594.5,182.8L595.0,178.6L595.5,178.8L596.0,178.7L596.5,180.7L597.0,178.7L597.5,182.4L598.0,180.9L598.5,180.4L599.0,185.4L599.5,191.6L600.0,177.4L600.0,228.2L600.0,266.9L599.5,279.9L599.0,275.5L598.5,269.3L598.0,277.5L597.5,267.6L597.0,278.1L596.5,282.3L596.0,280.9L595.5,271.6L595.0,273.8L594.5,273.6L594.0,281.3L593.5,278.4L593.0,282.8L592.5,271.7L592.0,274.5L591.5,277.7L591.0,274.4L590.5,277.7L590.0,278.9L589.5,274.0L589.0,280.4L588.5,288.1L588.0,280.4L587.5,273.6L587.0,277.4L586.5,280.7L586.0,271.6L585.5,268.1L585.0,273.3L584.5,270.7L584.0,272.4L583.5,271.9L583.0,279.6L582.5,277.8L582.0,276.4L581.5,267.9L581.0,276.3L580.5,274.2L580.0,269.9L579.5,274.4L579.0,281.5L578.5,282.7L578.0,282.1L577.5,289.8L577.0,282.1L576.5,277.0L576.0,268.6L575.5,282.0L575.0,266.1L574.5,279.6L574.0,279.6L573.5,279.6L573.0,313.5L572.5,313.0L572.0,312.9L571.5,313.2L571.0,312.9L570.5,312.9L570.0,313.6L569.5,312.9L569.0,304.4L568.5,304.3L568.0,312.8L567.5,308.2L567.0,305.0L566.5,313.8L566.0,307.9L565.5,313.1L565.0,312.9L564.5,313.7L564.0,313.3L563.5,311.8L563.0,313.4L562.5,309.6L562.0,307.8L561.5,313.1L561.0,310.6L560.5,306.7L560.0,303.5L559.5,306.7L559.0,307.3L558.5,313.3L558.0,313.7L557.5,308.4L557.0,313.8L556.5,311.7L556.0,309.0L555.5,313.4L555.0,312.8L554.5,312.9L554.0,313.4L553.5,313.5L553.0,308.0L552.5,313.1L552.0,313.7L551.5,304.5L551.0,313.7L550.5,313.3L550.0,313.0L549.5,304.4L549.0,312.7L548.5,313.8L548.0,313.7L547.5,312.9L547.0,313.3L546.5,313.6L546.0,313.4L545.5,308.5L545.0,306.1L544.5,304.3L544.0,313.2L543.5,311.6L543.0,313.0L542.5,313.5L542.0,312.8L541.5,311.0L541.0,313.1L540.5,312.7L540.0,313.8L539.5,313.0L539.0,313.2L538.5,312.7L538.0,313.2L537.5,312.2L537.0,313.7L536.5,313.1L536.0,313.2L535.5,313.8L535.0,313.0L534.5,309.3L534.0,313.2L533.5,311.2L533.0,313.6L532.5,313.5L532.0,305.6L531.5,312.4L531.0,312.8L530.5,308.5L530.0,306.1L529.5,308.5L529.0,313.0L528.5,312.9L528.0,304.5L527.5,312.8L527.0,313.5L526.5,306.9L526.0,309.7L525.5,313.6L525.0,313.4L524.5,312.9L524.0,313.2L523.5,313.4L523.0,312.7L522.5,313.0L522.0,311.7L521.5,313.1L521.0,309.5L520.5,313.0L520.0,305.4L519.5,313.0L519.0,313.3L518.5,308.4L518.0,306.9L517.5,312.4L517.0,313.2L516.5,313.2L516.0,312.7L515.5,308.5L515.0,306.1L514.5,308.5L514.0,313.4L513.5,313.0L513.0,307.9L512.5,305.5L512.0,312.9L511.5,313.6L511.0,304.7L510.5,312.9L510.0,309.8L509.5,313.7L509.0,312.1L508.5,313.0L508.0,313.7L507.5,312.8L507.0,312.7L506.5,313.7L506.0,308.1L505.5,312.4L505.0,313.2L504.5,313.7L504.0,307.8L503.5,311.5L503.0,313.6L502.5,312.0L502.0,312.2L501.5,289.1L501.0,283.8L500.5,289.1L500.0,312.7L499.5,311.6L499.0,311.9L498.5,313.7L498.0,287.0L497.5,281.3L497.0,287.0L496.5,295.0L496.0,312.1L495.5,304.1L495.0,297.9L494.5,313.1L494.0,297.3L493.5,282.7L493.0,279.6L492.5,282.7L492.0,297.3L491.5,294.9L491.0,313.2L490.5,312.3L490.0,306.1L489.5,285.6L489.0,279.6L488.5,285.6L488.0,312.3L487.5,313.0L487.0,311.7L486.5,311.6L486.0,311.8L485.5,303.5L485.0,313.3L484.5,311.4L484.0,299.9L483.5,295.3L483.0,278.8L482.5,275.3L482.0,278.8L481.5,295.2L481.0,313.2L480.5,312.4L480.0,308.8L479.5,294.6L479.0,302.8L478.5,312.5L478.0,313.1L477.5,313.3L477.0,291.9L476.5,278.2L476.0,275.3L475.5,278.2L475.0,291.9L474.5,311.7L474.0,312.1L473.5,313.8L473.0,311.7L472.5,311.7L472.0,312.7L471.5,311.4L471.0,313.5L470.5,312.9L470.0,313.3L469.5,293.7L469.0,271.9L468.5,261.2L468.0,257.6L467.5,257.3L467.0,258.5L466.5,264.4L466.0,279.0L465.5,306.4L465.0,313.5L464.5,302.0L464.0,312.5L463.5,312.7L463.0,312.3L462.5,312.9L462.0,311.2L461.5,289.2L461.0,270.0L460.5,260.7L460.0,257.6L459.5,257.3L459.0,258.3L458.5,263.5L458.0,276.3L457.5,300.3L457.0,313.2L456.5,312.7L456.0,312.7L455.5,312.3L455.0,299.4L454.5,311.9L454.0,312.8L453.5,296.0L453.0,312.7L452.5,312.5L452.0,312.7L451.5,312.8L451.0,311.2L450.5,313.2L450.0,312.9L449.5,311.4L449.0,312.6L448.5,311.4L448.0,300.4L447.5,313.6L447.0,293.0L446.5,303.3L446.0,298.6L445.5,311.3L445.0,299.1L444.5,313.2L444.0,311.6L443.5,312.1L443.0,312.8L442.5,303.1L442.0,298.9L441.5,312.1L441.0,312.3L440.5,294.8L440.0,307.8L439.5,295.3L439.0,312.5L438.5,311.6L438.0,312.7L437.5,297.7L437.0,312.1L436.5,311.9L436.0,308.7L435.5,313.6L435.0,313.7L434.5,293.5L434.0,300.6L433.5,313.8L433.0,313.0L432.5,312.2L432.0,312.3L431.5,294.0L431.0,312.6L430.5,296.7L430.0,312.6L429.5,296.3L429.0,289.8L428.5,297.2L428.0,295.2L427.5,302.8L427.0,311.5L426.5,311.9L426.0,304.2L425.5,311.6L425.0,311.5L424.5,311.4L424.0,311.4L423.5,313.5L423.0,311.9L422.5,312.9L422.0,311.4L421.5,303.9L421.0,312.0L420.5,311.4L420.0,311.6L419.5,311.6L419.0,312.2L418.5,312.8L418.0,313.1L417.5,298.8L417.0,313.2L416.5,313.0L416.0,313.3L415.5,313.0L415.0,303.9L414.5,313.0L414.0,313.5L413.5,311.5L413.0,313.5L412.5,302.0L412.0,296.7L411.5,302.0L411.0,293.8L410.5,313.4L410.0,313.4L409.5,311.5L409.0,311.8L408.5,312.3L408.0,313.4L407.5,311.7L407.0,312.7L406.5,313.2L406.0,293.4L405.5,312.3L405.0,311.5L404.5,313.3L404.0,311.5L403.5,295.6L403.0,305.0L402.5,311.3L402.0,313.4L401.5,302.0L401.0,296.0L400.5,302.0L400.0,303.9L399.5,313.4L399.0,313.2L398.5,312.1L398.0,304.3L397.5,312.2L397.0,311.9L396.5,311.6L396.0,312.8L395.5,313.7L395.0,312.3L394.5,301.8L394.0,308.3L393.5,312.9L393.0,312.8L392.5,297.6L392.0,312.5L391.5,313.0L391.0,297.3L390.5,307.6L390.0,284.1L389.5,270.6L389.0,264.3L388.5,262.5L388.0,262.5L387.5,263.7L387.0,268.9L386.5,280.7L386.0,302.0L385.5,313.2L385.0,311.4L384.5,311.3L384.0,312.0L383.5,311.7L383.0,313.2L382.5,310.8L382.0,293.7L381.5,295.8L381.0,266.3L380.5,255.0L380.0,254.3L379.5,262.8L379.0,288.2L378.5,311.7L378.0,271.0L377.5,271.0Z" fill="#0bae87"/>
        <path d="M217.0,401.2L217.0,379.2L217.5,377.5L218.0,379.3L218.5,378.0L219.0,362.2L219.5,363.9L220.0,369.3L220.5,362.1L221.0,369.6L221.5,358.4L222.0,366.2L222.5,373.4L223.0,367.2L223.5,369.1L224.0,367.9L224.5,372.9L225.0,363.9L225.5,373.1L226.0,372.0L226.5,372.6L227.0,372.3L227.5,373.1L228.0,362.2L228.5,364.7L229.0,373.8L229.5,367.0L230.0,373.7L230.5,365.3L231.0,370.4L231.5,367.8L232.0,361.9L232.5,361.3L233.0,364.2L233.5,372.0L234.0,373.6L234.5,366.8L235.0,367.9L235.5,357.4L236.0,357.8L236.5,373.1L237.0,370.3L237.5,363.4L238.0,370.2L238.5,354.6L239.0,373.8L239.5,370.3L240.0,359.2L240.5,355.3L241.0,368.6L241.5,372.5L242.0,366.6L242.5,371.7L243.0,363.8L243.5,371.4L244.0,373.1L244.5,366.7L245.0,361.6L245.5,368.9L246.0,366.6L246.5,367.1L247.0,368.2L247.5,373.8L248.0,371.0L248.5,358.1L249.0,368.4L249.5,361.2L250.0,355.1L250.5,373.8L251.0,362.9L251.5,368.9L252.0,373.8L252.5,372.8L253.0,368.8L253.5,369.4L254.0,358.2L254.5,371.2L255.0,361.1L255.5,370.3L256.0,355.5L256.5,354.2L257.0,373.3L257.5,360.1L258.0,373.5L258.5,371.5L259.0,357.7L259.5,369.9L260.0,373.8L260.5,373.8L261.0,353.8L261.5,358.7L262.0,354.7L262.5,371.4L263.0,371.9L263.5,364.1L264.0,373.8L264.5,366.4L265.0,373.3L265.5,373.1L266.0,362.1L266.5,372.6L267.0,353.7L267.5,364.6L268.0,366.4L268.5,365.3L269.0,372.6L269.5,355.0L270.0,373.8L270.5,356.9L271.0,368.0L271.5,366.4L272.0,367.7L272.5,370.7L273.0,373.2L273.5,371.3L274.0,365.4L274.5,371.8L275.0,360.8L275.5,363.9L276.0,373.8L276.5,373.6L277.0,359.1L277.5,367.9L278.0,373.4L278.5,368.1L279.0,367.6L279.5,363.5L280.0,369.1L280.5,356.0L281.0,361.1L281.5,350.6L282.0,337.9L282.5,315.6L283.0,315.6L283.5,315.6L284.0,337.9L284.5,350.6L285.0,361.1L285.5,373.7L286.0,373.6L286.5,368.9L287.0,373.6L287.5,372.0L288.0,361.1L288.5,350.6L289.0,337.9L289.5,315.6L290.0,315.6L290.5,315.6L291.0,337.9L291.5,350.6L292.0,361.1L292.5,373.8L293.0,373.1L293.5,372.4L294.0,358.7L294.5,372.0L295.0,364.0L295.5,359.1L296.0,348.3L296.5,334.9L297.0,315.6L297.5,315.6L298.0,323.4L298.5,340.7L299.0,352.8L299.5,363.1L300.0,366.3L300.5,370.5L301.0,373.7L301.5,371.5L302.0,368.7L302.5,359.1L303.0,348.3L303.5,334.9L304.0,315.6L304.5,315.6L305.0,323.4L305.5,340.7L306.0,352.8L306.5,363.1L307.0,373.6L307.5,369.7L308.0,357.0L308.5,356.8L309.0,356.8L309.5,363.1L310.0,352.8L310.5,340.7L311.0,323.4L311.5,315.6L312.0,315.6L312.5,334.9L313.0,348.3L313.5,359.1L314.0,358.4L314.5,363.8L315.0,370.8L315.5,363.3L316.0,357.2L316.5,363.1L317.0,372.2L317.5,373.5L318.0,366.6L318.5,361.9L319.0,366.1L319.0,401.2L319.0,427.7L318.5,435.2L318.0,458.4L317.5,444.2L317.0,454.6L316.5,439.5L316.0,453.5L315.5,426.1L315.0,446.1L314.5,458.9L314.0,433.7L313.5,443.8L313.0,454.1L312.5,467.5L312.0,486.8L311.5,486.8L311.0,479.0L310.5,461.7L310.0,449.6L309.5,439.3L309.0,423.3L308.5,442.3L308.0,428.4L307.5,436.6L307.0,422.7L306.5,439.3L306.0,449.6L305.5,461.7L305.0,479.0L304.5,486.8L304.0,486.8L303.5,467.5L303.0,465.4L302.5,443.3L302.0,462.3L301.5,424.3L301.0,426.2L300.5,450.8L300.0,443.1L299.5,443.6L299.0,449.6L298.5,461.7L298.0,479.0L297.5,486.8L297.0,486.8L296.5,467.5L296.0,454.1L295.5,459.9L295.0,433.7L294.5,436.9L294.0,446.0L293.5,463.5L293.0,427.5L292.5,449.1L292.0,441.3L291.5,451.8L291.0,464.5L290.5,486.8L290.0,486.8L289.5,486.8L289.0,464.5L288.5,455.5L288.0,443.6L287.5,461.3L287.0,452.9L286.5,432.9L286.0,426.5L285.5,439.9L285.0,462.2L284.5,451.8L284.0,464.5L283.5,486.8L283.0,486.8L282.5,486.8L282.0,464.5L281.5,451.8L281.0,441.3L280.5,423.6L280.0,428.5L279.5,432.8L279.0,436.2L278.5,455.3L278.0,428.6L277.5,433.7L277.0,443.2L276.5,455.1L276.0,433.6L275.5,440.5L275.0,460.5L274.5,430.1L274.0,422.6L273.5,435.7L273.0,424.9L272.5,439.1L272.0,431.4L271.5,422.8L271.0,438.2L270.5,432.1L270.0,441.6L269.5,424.9L269.0,449.0L268.5,433.3L268.0,447.1L267.5,435.1L267.0,422.7L266.5,432.0L266.0,424.4L265.5,449.5L265.0,442.5L264.5,424.2L264.0,422.6L263.5,433.1L263.0,462.0L262.5,440.8L262.0,422.8L261.5,422.6L261.0,423.7L260.5,436.3L260.0,423.0L259.5,422.6L259.0,438.2L258.5,431.9L258.0,440.7L257.5,427.8L257.0,422.6L256.5,422.7L256.0,423.4L255.5,435.9L255.0,424.1L254.5,423.3L254.0,460.5L253.5,440.9L253.0,426.5L252.5,461.9L252.0,442.2L251.5,454.6L251.0,423.8L250.5,458.7L250.0,423.1L249.5,463.7L249.0,429.1L248.5,462.8L248.0,461.8L247.5,422.6L247.0,437.4L246.5,463.1L246.0,427.7L245.5,427.8L245.0,435.8L244.5,423.7L244.0,427.8L243.5,436.6L243.0,434.2L242.5,428.9L242.0,424.2L241.5,422.7L241.0,427.8L240.5,425.1L240.0,465.2L239.5,454.7L239.0,426.3L238.5,424.2L238.0,440.7L237.5,426.7L237.0,464.0L236.5,424.3L236.0,449.4L235.5,424.7L235.0,423.3L234.5,423.3L234.0,458.4L233.5,423.9L233.0,425.5L232.5,422.7L232.0,448.0L231.5,454.9L231.0,457.1L230.5,422.7L230.0,425.7L229.5,454.4L229.0,432.1L228.5,425.4L228.0,425.2L227.5,422.7L227.0,444.1L226.5,444.5L226.0,431.9L225.5,423.3L225.0,427.2L224.5,454.9L224.0,434.3L223.5,454.0L223.0,438.6L222.5,433.1L222.0,424.3L221.5,434.5L221.0,422.7L220.5,453.6L220.0,430.4L219.5,462.8L219.0,442.2L218.5,419.7L218.0,424.1L217.5,432.6L217.0,438.3Z M377.5,401.2L377.5,358.4L378.0,358.4L378.5,346.3L379.0,341.2L379.5,366.6L380.0,375.1L380.5,374.4L381.0,363.1L381.5,333.6L382.0,320.1L382.5,315.6L383.0,333.5L383.5,322.7L384.0,323.4L384.5,331.9L385.0,332.5L385.5,346.1L386.0,329.8L386.5,350.9L387.0,363.5L387.5,369.0L388.0,370.4L388.5,370.3L389.0,368.4L389.5,361.7L390.0,347.3L390.5,323.4L391.0,329.2L391.5,321.6L392.0,315.6L392.5,332.6L393.0,320.1L393.5,341.4L394.0,315.6L394.5,322.1L395.0,323.6L395.5,333.3L396.0,341.3L396.5,337.8L397.0,344.8L397.5,320.2L398.0,320.9L398.5,320.4L399.0,322.8L399.5,323.7L400.0,321.8L400.5,340.6L401.0,348.1L401.5,340.6L402.0,322.7L402.5,338.2L403.0,331.9L403.5,321.6L404.0,332.8L404.5,323.7L405.0,325.0L405.5,333.3L406.0,341.3L406.5,336.9L407.0,323.7L407.5,323.6L408.0,321.2L408.5,323.5L409.0,322.0L409.5,320.7L410.0,338.5L410.5,334.5L411.0,343.0L411.5,334.5L412.0,342.0L412.5,315.6L413.0,315.6L413.5,333.4L414.0,319.7L414.5,315.6L415.0,315.6L415.5,342.0L416.0,349.8L416.5,342.0L417.0,345.3L417.5,323.2L418.0,320.3L418.5,343.3L419.0,315.6L419.5,322.3L420.0,320.0L420.5,333.3L421.0,341.3L421.5,333.3L422.0,342.7L422.5,321.8L423.0,346.6L423.5,322.8L424.0,323.7L424.5,319.7L425.0,320.9L425.5,340.6L426.0,348.1L426.5,340.6L427.0,332.1L427.5,328.2L428.0,347.1L428.5,321.8L429.0,321.0L429.5,324.9L430.0,338.4L430.5,340.6L431.0,348.1L431.5,340.6L432.0,330.2L432.5,336.3L433.0,322.5L433.5,320.3L434.0,338.1L434.5,315.6L435.0,344.6L435.5,329.8L436.0,322.3L436.5,333.3L437.0,341.3L437.5,333.3L438.0,335.1L438.5,319.5L439.0,315.6L439.5,315.6L440.0,322.2L440.5,323.4L441.0,319.6L441.5,333.4L442.0,342.2L442.5,334.5L443.0,343.0L443.5,334.5L444.0,337.3L444.5,321.7L445.0,321.1L445.5,321.0L446.0,322.2L446.5,322.9L447.0,321.9L447.5,315.6L448.0,320.3L448.5,344.6L449.0,341.3L449.5,339.4L450.0,315.6L450.5,321.4L451.0,323.3L451.5,322.4L452.0,315.6L452.5,343.7L453.0,315.6L453.5,323.8L454.0,320.8L454.5,315.6L455.0,315.6L455.5,315.6L456.0,322.7L456.5,330.3L457.0,337.7L457.5,328.3L458.0,350.8L458.5,362.9L459.0,367.7L459.5,368.7L460.0,368.4L460.5,365.5L461.0,356.7L461.5,338.8L462.0,315.6L462.5,321.7L463.0,322.0L463.5,321.9L464.0,344.3L464.5,322.2L465.0,321.7L465.5,323.0L466.0,350.4L466.5,365.0L467.0,370.9L467.5,372.1L468.0,371.8L468.5,368.2L469.0,357.5L469.5,335.7L470.0,321.4L470.5,332.2L471.0,320.5L471.5,315.6L472.0,319.9L472.5,324.2L473.0,321.9L473.5,319.5L474.0,320.5L474.5,320.4L475.0,343.8L475.5,361.5L476.0,365.2L476.5,361.5L477.0,343.8L477.5,322.2L478.0,319.5L478.5,322.6L479.0,315.6L479.5,323.0L480.0,315.6L480.5,321.2L481.0,325.8L481.5,343.8L482.0,361.5L482.5,365.2L483.0,361.5L483.5,343.8L484.0,315.6L484.5,321.7L485.0,323.4L485.5,315.6L486.0,319.9L486.5,320.6L487.0,346.6L487.5,323.6L488.0,327.4L488.5,347.3L489.0,354.1L489.5,347.3L490.0,322.0L490.5,323.4L491.0,319.8L491.5,322.3L492.0,336.2L492.5,354.5L493.0,358.4L493.5,354.5L494.0,336.2L494.5,315.6L495.0,343.4L495.5,321.6L496.0,321.6L496.5,323.2L497.0,347.3L497.5,354.1L498.0,347.3L498.5,320.8L499.0,321.6L499.5,334.0L500.0,336.1L500.5,343.8L501.0,349.8L501.5,343.8L502.0,320.0L502.5,322.6L503.0,326.4L503.5,317.8L504.0,315.6L504.5,317.5L505.0,317.7L505.5,319.2L506.0,318.0L506.5,318.2L507.0,318.1L507.5,326.2L508.0,331.0L508.5,326.2L509.0,325.5L509.5,317.4L510.0,319.1L510.5,319.8L511.0,318.5L511.5,317.5L512.0,317.8L512.5,317.5L513.0,318.6L513.5,327.7L514.0,333.1L514.5,327.7L515.0,318.2L515.5,317.6L516.0,319.1L516.5,325.0L517.0,317.4L517.5,315.6L518.0,317.4L518.5,322.0L519.0,317.4L519.5,326.2L520.0,331.0L520.5,326.2L521.0,317.9L521.5,320.2L522.0,317.5L522.5,317.7L523.0,326.4L523.5,317.8L524.0,317.6L524.5,320.2L525.0,321.6L525.5,327.7L526.0,333.1L526.5,327.7L527.0,317.8L527.5,318.2L528.0,317.8L528.5,315.6L529.0,318.5L529.5,325.9L530.0,326.9L530.5,318.0L531.0,325.8L531.5,326.2L532.0,331.0L532.5,326.2L533.0,318.4L533.5,318.6L534.0,319.1L534.5,315.6L535.0,318.9L535.5,318.3L536.0,315.6L536.5,323.6L537.0,327.9L537.5,329.8L538.0,334.1L538.5,329.8L539.0,315.6L539.5,322.2L540.0,315.6L540.5,328.6L541.0,318.7L541.5,315.6L542.0,319.0L542.5,323.6L543.0,329.5L543.5,326.2L544.0,331.0L544.5,326.2L545.0,318.9L545.5,324.0L546.0,317.4L546.5,315.6L547.0,327.9L547.5,319.0L548.0,317.3L548.5,318.9L549.0,317.8L549.5,327.7L550.0,333.1L550.5,327.7L551.0,315.6L551.5,319.0L552.0,318.2L552.5,318.1L553.0,321.0L553.5,323.8L554.0,318.4L554.5,317.5L555.0,328.0L555.5,326.2L556.0,331.0L556.5,326.2L557.0,315.6L557.5,315.6L558.0,318.3L558.5,315.6L559.0,318.4L559.5,326.8L560.0,329.8L560.5,315.6L561.0,315.6L561.5,330.6L562.0,335.1L562.5,330.6L563.0,318.8L563.5,318.8L564.0,328.3L564.5,315.6L565.0,318.7L565.5,320.3L566.0,318.6L566.5,329.1L567.0,329.0L567.5,326.2L568.0,331.0L568.5,326.2L569.0,315.6L569.5,318.7L570.0,317.8L570.5,315.6L571.0,320.8L571.5,318.9L572.0,315.6L572.5,315.6L573.0,323.9L573.5,349.8L574.0,349.8L574.5,349.8L575.0,367.9L575.5,369.7L576.0,368.0L576.5,355.0L577.0,347.3L577.5,339.6L578.0,347.3L578.5,355.0L579.0,357.2L579.5,361.3L580.0,359.3L580.5,369.1L581.0,367.7L581.5,355.7L582.0,355.5L582.5,357.5L583.0,349.8L583.5,357.5L584.0,357.5L584.5,357.8L585.0,364.9L585.5,366.5L586.0,367.6L586.5,369.5L587.0,369.1L587.5,354.2L588.0,349.0L588.5,341.3L589.0,349.0L589.5,352.3L590.0,366.2L590.5,364.7L591.0,365.8L591.5,368.2L592.0,352.1L592.5,364.3L593.0,363.0L593.5,355.8L594.0,348.1L594.5,351.9L595.0,355.5L595.5,361.9L596.0,367.7L596.5,370.3L597.0,361.6L597.5,360.4L598.0,354.1L598.5,355.8L599.0,361.9L599.5,354.8L600.0,359.2L600.0,401.2L600.0,440.5L599.5,440.5L599.0,445.1L598.5,449.4L598.0,448.3L597.5,450.3L597.0,437.2L596.5,441.1L596.0,440.1L595.5,447.0L595.0,449.4L594.5,446.6L594.0,454.3L593.5,455.4L593.0,438.9L592.5,449.1L592.0,443.4L591.5,446.3L591.0,439.6L590.5,446.1L590.0,439.1L589.5,445.7L589.0,453.8L588.5,461.1L588.0,453.4L587.5,445.7L587.0,452.8L586.5,445.0L586.0,447.1L585.5,445.7L585.0,440.8L584.5,451.3L584.0,443.1L583.5,444.9L583.0,452.6L582.5,453.9L582.0,455.0L581.5,436.4L581.0,451.4L580.5,445.9L580.0,450.0L579.5,456.0L579.0,446.2L578.5,449.1L578.0,455.1L577.5,462.8L577.0,455.1L576.5,451.5L576.0,436.4L575.5,451.7L575.0,441.2L574.5,452.6L574.0,452.6L573.5,452.6L573.0,474.7L572.5,486.8L572.0,486.8L571.5,486.8L571.0,486.8L570.5,486.8L570.0,484.8L569.5,486.8L569.0,486.8L568.5,485.6L568.0,486.8L567.5,476.2L567.0,471.4L566.5,476.2L566.0,480.6L565.5,486.8L565.0,478.6L564.5,478.6L564.0,486.8L563.5,484.8L563.0,486.8L562.5,483.5L562.0,486.8L561.5,479.5L561.0,486.8L560.5,471.0L560.0,466.3L559.5,471.0L559.0,486.8L558.5,486.8L558.0,477.7L557.5,486.8L557.0,486.8L556.5,486.8L556.0,486.8L555.5,486.8L555.0,486.8L554.5,480.2L554.0,478.3L553.5,486.8L553.0,486.8L552.5,486.8L552.0,485.4L551.5,486.8L551.0,482.6L550.5,474.9L550.0,471.4L549.5,476.2L549.0,486.8L548.5,482.7L548.0,485.6L547.5,486.8L547.0,478.2L546.5,486.8L546.0,486.8L545.5,486.8L545.0,478.2L544.5,475.0L544.0,475.4L543.5,477.7L543.0,480.6L542.5,478.9L542.0,486.8L541.5,475.9L541.0,477.4L540.5,477.9L540.0,474.0L539.5,477.9L539.0,486.8L538.5,486.8L538.0,479.4L537.5,483.6L537.0,486.8L536.5,476.4L536.0,482.5L535.5,481.1L535.0,484.3L534.5,478.0L534.0,486.8L533.5,486.8L533.0,482.3L532.5,486.8L532.0,486.8L531.5,486.8L531.0,482.2L530.5,477.9L530.0,474.0L529.5,477.9L529.0,486.8L528.5,482.6L528.0,486.8L527.5,486.8L527.0,479.8L526.5,486.8L526.0,481.1L525.5,485.2L525.0,478.0L524.5,481.2L524.0,480.5L523.5,476.5L523.0,482.6L522.5,486.8L522.0,486.8L521.5,486.8L521.0,486.8L520.5,476.2L520.0,471.4L519.5,476.2L519.0,486.8L518.5,486.8L518.0,484.5L517.5,486.8L517.0,475.6L516.5,486.8L516.0,486.8L515.5,475.8L515.0,486.8L514.5,485.3L514.0,486.8L513.5,486.8L513.0,481.1L512.5,481.4L512.0,482.4L511.5,486.8L511.0,486.8L510.5,476.2L510.0,471.4L509.5,476.2L509.0,481.5L508.5,486.8L508.0,486.8L507.5,486.8L507.0,486.8L506.5,486.8L506.0,486.8L505.5,486.8L505.0,482.2L504.5,486.8L504.0,486.8L503.5,486.8L503.0,486.8L502.5,472.1L502.0,486.8L501.5,458.6L501.0,452.6L500.5,458.6L500.0,470.2L499.5,486.8L499.0,486.8L498.5,466.5L498.0,451.6L497.5,444.0L497.0,451.6L496.5,468.2L496.0,466.0L495.5,486.8L495.0,486.8L494.5,486.8L494.0,464.2L493.5,444.0L493.0,439.7L492.5,444.0L492.0,464.2L491.5,476.4L491.0,486.8L490.5,486.8L490.0,476.8L489.5,455.1L489.0,448.3L488.5,455.1L488.0,483.7L487.5,486.8L487.0,464.2L486.5,480.5L486.0,476.0L485.5,460.9L485.0,486.8L484.5,476.4L484.0,486.8L483.5,462.9L483.0,441.7L482.5,437.2L482.0,441.7L481.5,462.9L481.0,469.9L480.5,486.8L480.0,466.7L479.5,470.3L479.0,486.8L478.5,486.8L478.0,483.3L477.5,486.8L477.0,460.0L476.5,443.3L476.0,439.7L475.5,443.3L475.0,460.0L474.5,475.9L474.0,486.8L473.5,461.4L473.0,486.8L472.5,486.8L472.0,486.8L471.5,486.8L471.0,486.8L470.5,486.8L470.0,486.8L469.5,464.9L469.0,441.1L468.5,429.4L468.0,425.5L467.5,425.2L467.0,426.4L466.5,432.9L466.0,448.9L465.5,478.8L465.0,483.6L464.5,471.4L464.0,470.9L463.5,486.8L463.0,474.4L462.5,486.8L462.0,486.8L461.5,459.9L461.0,439.1L460.5,428.9L460.0,425.5L459.5,425.2L459.0,426.3L458.5,431.9L458.0,445.9L457.5,472.1L457.0,486.8L456.5,486.8L456.0,466.1L455.5,477.3L455.0,486.8L454.5,486.8L454.0,469.9L453.5,486.8L453.0,476.0L452.5,467.2L452.0,486.8L451.5,486.8L451.0,486.8L450.5,472.5L450.0,468.4L449.5,486.8L449.0,461.1L448.5,486.8L448.0,486.8L447.5,476.3L447.0,470.0L446.5,486.8L446.0,486.8L445.5,486.8L445.0,468.9L444.5,486.8L444.0,486.8L443.5,486.8L443.0,464.4L442.5,475.7L442.0,486.8L441.5,459.1L441.0,486.8L440.5,459.9L440.0,465.4L439.5,472.0L439.0,486.8L438.5,479.0L438.0,477.4L437.5,486.8L437.0,486.8L436.5,486.8L436.0,459.4L435.5,467.4L435.0,486.8L434.5,486.8L434.0,486.8L433.5,468.6L433.0,486.8L432.5,486.8L432.0,465.8L431.5,460.4L431.0,474.3L430.5,486.8L430.0,486.8L429.5,467.9L429.0,459.4L428.5,467.9L428.0,486.8L427.5,486.8L427.0,486.8L426.5,486.8L426.0,481.5L425.5,486.8L425.0,486.8L424.5,467.6L424.0,486.8L423.5,478.2L423.0,486.8L422.5,486.8L422.0,486.8L421.5,469.1L421.0,461.1L420.5,469.1L420.0,462.1L419.5,486.8L419.0,486.8L418.5,460.1L418.0,486.8L417.5,486.8L417.0,486.8L416.5,472.1L416.0,474.2L415.5,486.8L415.0,486.8L414.5,486.8L414.0,486.8L413.5,486.8L413.0,486.8L412.5,472.0L412.0,465.4L411.5,472.0L411.0,486.8L410.5,486.8L410.0,480.8L409.5,486.8L409.0,486.8L408.5,468.0L408.0,486.8L407.5,473.7L407.0,486.8L406.5,486.8L406.0,460.0L405.5,486.8L405.0,486.8L404.5,486.8L404.0,486.8L403.5,486.8L403.0,482.4L402.5,486.8L402.0,462.1L401.5,465.6L401.0,465.4L400.5,472.0L400.0,482.1L399.5,462.2L399.0,486.8L398.5,486.8L398.0,486.8L397.5,486.8L397.0,486.8L396.5,486.8L396.0,486.8L395.5,471.7L395.0,459.7L394.5,475.7L394.0,471.8L393.5,467.2L393.0,486.8L392.5,486.8L392.0,486.8L391.5,480.3L391.0,467.6L390.5,480.2L390.0,455.1L389.5,440.7L389.0,434.0L388.5,432.1L388.0,432.0L387.5,433.4L387.0,438.9L386.5,451.5L386.0,474.2L385.5,486.8L385.0,486.8L384.5,486.8L384.0,483.1L383.5,467.1L383.0,486.8L382.5,486.8L382.0,486.8L381.5,468.3L381.0,438.0L380.5,426.3L380.0,425.6L379.5,434.3L379.0,460.4L378.5,468.7L378.0,444.0L377.5,444.0Z" fill="#0bae87"/>
      </g>
      <rect x="319" y="142" width="1.200" height="345" fill="#f0f6f4"/>
      <rect x="376.500" y="142" width="1.200" height="345" fill="#b02828"/>
    </svg>
  </div>
  <div id="right"></div>
  <div class="pill on" style="top:146px">smpl</div>
  <div class="pill" style="top:160.500px">dB</div>
  <div class="pill" style="top:174.500px">norm</div>
  <div class="pill" style="top:189px">perc</div>
  <div class="sl" style="top:222.7px">0</div><div class="st" style="top:227.7px"></div><div class="sl ng" style="top:248.8px">-10000</div><div class="st" style="top:253.8px"></div><div class="sl ng" style="top:274.8px">-20000</div><div class="st" style="top:279.8px"></div><div class="sl ng" style="top:300.9px">-30000</div><div class="st" style="top:305.9px"></div><div class="sl" style="top:317.5px">30000</div><div class="st" style="top:322.5px"></div><div class="sl" style="top:343.6px">20000</div><div class="st" style="top:348.6px"></div><div class="sl" style="top:369.6px">10000</div><div class="st" style="top:374.6px"></div><div class="sl" style="top:395.7px">0</div><div class="st" style="top:400.7px"></div><div class="sl ng" style="top:421.8px">-10000</div><div class="st" style="top:426.8px"></div><div class="sl ng" style="top:447.8px">-20000</div><div class="st" style="top:452.8px"></div><div class="sl ng" style="top:473.9px">-30000</div><div class="st" style="top:478.9px"></div><div class="sm" style="top:204.2px;width:3px"></div><div class="sm" style="top:206.9px;width:3px"></div><div class="sm" style="top:209.5px;width:3px"></div><div class="sm" style="top:212.1px;width:3px"></div><div class="sm" style="top:214.7px;width:4px"></div><div class="sm" style="top:217.3px;width:3px"></div><div class="sm" style="top:219.9px;width:3px"></div><div class="sm" style="top:222.5px;width:3px"></div><div class="sm" style="top:225.1px;width:3px"></div><div class="sm" style="top:230.3px;width:3px"></div><div class="sm" style="top:232.9px;width:3px"></div><div class="sm" style="top:235.5px;width:3px"></div><div class="sm" style="top:238.1px;width:3px"></div><div class="sm" style="top:240.7px;width:4px"></div><div class="sm" style="top:243.3px;width:3px"></div><div class="sm" style="top:245.9px;width:3px"></div><div class="sm" style="top:248.5px;width:3px"></div><div class="sm" style="top:251.2px;width:3px"></div><div class="sm" style="top:256.4px;width:3px"></div><div class="sm" style="top:259.0px;width:3px"></div><div class="sm" style="top:261.6px;width:3px"></div><div class="sm" style="top:264.2px;width:3px"></div><div class="sm" style="top:266.8px;width:4px"></div><div class="sm" style="top:269.4px;width:3px"></div><div class="sm" style="top:272.0px;width:3px"></div><div class="sm" style="top:274.6px;width:3px"></div><div class="sm" style="top:277.2px;width:3px"></div><div class="sm" style="top:282.4px;width:3px"></div><div class="sm" style="top:285.0px;width:3px"></div><div class="sm" style="top:287.6px;width:3px"></div><div class="sm" style="top:290.2px;width:3px"></div><div class="sm" style="top:292.9px;width:4px"></div><div class="sm" style="top:295.5px;width:3px"></div><div class="sm" style="top:298.1px;width:3px"></div><div class="sm" style="top:300.7px;width:3px"></div><div class="sm" style="top:303.3px;width:3px"></div><div class="sm" style="top:308.5px;width:3px"></div><div class="sm" style="top:311.1px;width:3px"></div><div class="sm" style="top:317.3px;width:3px"></div><div class="sm" style="top:319.9px;width:3px"></div><div class="sm" style="top:325.1px;width:3px"></div><div class="sm" style="top:327.7px;width:3px"></div><div class="sm" style="top:330.3px;width:3px"></div><div class="sm" style="top:332.9px;width:3px"></div><div class="sm" style="top:335.5px;width:4px"></div><div class="sm" style="top:338.2px;width:3px"></div><div class="sm" style="top:340.8px;width:3px"></div><div class="sm" style="top:343.4px;width:3px"></div><div class="sm" style="top:346.0px;width:3px"></div><div class="sm" style="top:351.2px;width:3px"></div><div class="sm" style="top:353.8px;width:3px"></div><div class="sm" style="top:356.4px;width:3px"></div><div class="sm" style="top:359.0px;width:3px"></div><div class="sm" style="top:361.6px;width:4px"></div><div class="sm" style="top:364.2px;width:3px"></div><div class="sm" style="top:366.8px;width:3px"></div><div class="sm" style="top:369.4px;width:3px"></div><div class="sm" style="top:372.0px;width:3px"></div><div class="sm" style="top:377.2px;width:3px"></div><div class="sm" style="top:379.9px;width:3px"></div><div class="sm" style="top:382.5px;width:3px"></div><div class="sm" style="top:385.1px;width:3px"></div><div class="sm" style="top:387.7px;width:4px"></div><div class="sm" style="top:390.3px;width:3px"></div><div class="sm" style="top:392.9px;width:3px"></div><div class="sm" style="top:395.5px;width:3px"></div><div class="sm" style="top:398.1px;width:3px"></div><div class="sm" style="top:403.3px;width:3px"></div><div class="sm" style="top:405.9px;width:3px"></div><div class="sm" style="top:408.5px;width:3px"></div><div class="sm" style="top:411.1px;width:3px"></div><div class="sm" style="top:413.7px;width:4px"></div><div class="sm" style="top:416.3px;width:3px"></div><div class="sm" style="top:418.9px;width:3px"></div><div class="sm" style="top:421.5px;width:3px"></div><div class="sm" style="top:424.2px;width:3px"></div><div class="sm" style="top:429.4px;width:3px"></div><div class="sm" style="top:432.0px;width:3px"></div><div class="sm" style="top:434.6px;width:3px"></div><div class="sm" style="top:437.2px;width:3px"></div><div class="sm" style="top:439.8px;width:4px"></div><div class="sm" style="top:442.4px;width:3px"></div><div class="sm" style="top:445.0px;width:3px"></div><div class="sm" style="top:447.6px;width:3px"></div><div class="sm" style="top:450.2px;width:3px"></div><div class="sm" style="top:455.4px;width:3px"></div><div class="sm" style="top:458.0px;width:3px"></div><div class="sm" style="top:460.6px;width:3px"></div><div class="sm" style="top:463.2px;width:3px"></div><div class="sm" style="top:465.9px;width:4px"></div><div class="sm" style="top:468.5px;width:3px"></div><div class="sm" style="top:471.1px;width:3px"></div><div class="sm" style="top:473.7px;width:3px"></div><div class="sm" style="top:476.3px;width:3px"></div><div class="sm" style="top:481.5px;width:3px"></div><div class="sm" style="top:484.1px;width:3px"></div>
  <div id="bot">
    <svg width="650" height="19" viewBox="0 487 650 19">
      <path d="M208 487.500h392" stroke="#8a9696" stroke-width="1"/>
      <g fill="#d4d4d4"><rect x="10.200" y="492.600" width="2.200" height="1.800"/><rect x="10.200" y="495.200" width="2.200" height="1.800"/><rect x="10.200" y="497.800" width="2.200" height="1.800"/><rect x="13.200" y="492.600" width="5.400" height="1.800"/><rect x="13.200" y="495.200" width="5.400" height="1.800"/><rect x="13.200" y="497.800" width="5.400" height="1.800"/></g>
      <rect x="32" y="493" width="10" height="7" fill="#3a4646"/>
      <g fill="none" stroke="#3a4646" stroke-width="1.200"><circle cx="148.500" cy="496.500" r="3.500"/><path d="M143.500 493v7M153.500 493v7"/></g>
      <rect x="166.300" y="492.600" width="9.400" height="7.400" rx="1" fill="#d8d8d8"/><path d="M167.500 499l2.500-3 2 2 1.500-1.500 1.500 2.500z" fill="#0f1c1d"/><circle cx="173" cy="494.800" r="0.900" fill="#0f1c1d"/>
      <path d="M190 496.500l3-2.500v5zM194.500 494.500q2 2 0 4" fill="#3a4646" stroke="#3a4646" stroke-width="1"/>
    </svg>
  </div>
  <div class="tt" style="left:212.0px"></div><div class="tl" style="left:216.0px">00:00.000</div><div class="tt" style="left:272.3px"></div><div class="tl" style="left:276.3px">00:20.000</div><div class="tt" style="left:332.6px"></div><div class="tl" style="left:336.6px">00:40.000</div><div class="tt" style="left:392.9px"></div><div class="tl" style="left:396.9px">01:00.000</div><div class="tt" style="left:453.2px"></div><div class="tl" style="left:457.2px">01:20.000</div><div class="tt" style="left:513.5px"></div><div class="tl" style="left:517.5px">01:40.000</div><div class="tt" style="left:573.8px"></div><div class="tl" style="left:577.8px">02:00.000</div><div class="tm" style="left:218.0px;height:2px"></div><div class="tm" style="left:224.1px;height:2px"></div><div class="tm" style="left:230.1px;height:2px"></div><div class="tm" style="left:236.1px;height:2px"></div><div class="tm" style="left:242.2px;height:4px"></div><div class="tm" style="left:248.2px;height:2px"></div><div class="tm" style="left:254.2px;height:2px"></div><div class="tm" style="left:260.2px;height:2px"></div><div class="tm" style="left:266.3px;height:2px"></div><div class="tm" style="left:278.3px;height:2px"></div><div class="tm" style="left:284.4px;height:2px"></div><div class="tm" style="left:290.4px;height:2px"></div><div class="tm" style="left:296.4px;height:2px"></div><div class="tm" style="left:302.4px;height:4px"></div><div class="tm" style="left:308.5px;height:2px"></div><div class="tm" style="left:314.5px;height:2px"></div><div class="tm" style="left:320.5px;height:2px"></div><div class="tm" style="left:326.6px;height:2px"></div><div class="tm" style="left:338.6px;height:2px"></div><div class="tm" style="left:344.7px;height:2px"></div><div class="tm" style="left:350.7px;height:2px"></div><div class="tm" style="left:356.7px;height:2px"></div><div class="tm" style="left:362.8px;height:4px"></div><div class="tm" style="left:368.8px;height:2px"></div><div class="tm" style="left:374.8px;height:2px"></div><div class="tm" style="left:380.8px;height:2px"></div><div class="tm" style="left:386.9px;height:2px"></div><div class="tm" style="left:398.9px;height:2px"></div><div class="tm" style="left:405.0px;height:2px"></div><div class="tm" style="left:411.0px;height:2px"></div><div class="tm" style="left:417.0px;height:2px"></div><div class="tm" style="left:423.1px;height:4px"></div><div class="tm" style="left:429.1px;height:2px"></div><div class="tm" style="left:435.1px;height:2px"></div><div class="tm" style="left:441.1px;height:2px"></div><div class="tm" style="left:447.2px;height:2px"></div><div class="tm" style="left:459.2px;height:2px"></div><div class="tm" style="left:465.3px;height:2px"></div><div class="tm" style="left:471.3px;height:2px"></div><div class="tm" style="left:477.3px;height:2px"></div><div class="tm" style="left:483.4px;height:4px"></div><div class="tm" style="left:489.4px;height:2px"></div><div class="tm" style="left:495.4px;height:2px"></div><div class="tm" style="left:501.4px;height:2px"></div><div class="tm" style="left:507.5px;height:2px"></div><div class="tm" style="left:519.5px;height:2px"></div><div class="tm" style="left:525.6px;height:2px"></div><div class="tm" style="left:531.6px;height:2px"></div><div class="tm" style="left:537.6px;height:2px"></div><div class="tm" style="left:543.7px;height:4px"></div><div class="tm" style="left:549.7px;height:2px"></div><div class="tm" style="left:555.7px;height:2px"></div><div class="tm" style="left:561.7px;height:2px"></div><div class="tm" style="left:567.8px;height:2px"></div><div class="tm" style="left:579.8px;height:2px"></div><div class="tm" style="left:585.9px;height:2px"></div><div class="tm" style="left:591.9px;height:2px"></div><div class="tm" style="left:597.9px;height:2px"></div>
  <svg width="650" height="506" viewBox="0 0 650 506" style="pointer-events:none;z-index:30">
    <path d="M319.600 479.500c2 2.600 4 4.800 4 7.200a4 4 0 0 1-8 0c0-2.400 2-4.600 4-7.200z" fill="#fff"/><circle cx="319.600" cy="486.800" r="1.600" fill="#1a2a2a"/>
  </svg>
  <div id="wm">Www.OnDown.Com</div>
</div>
<div id="bt"></div><div id="bl"></div><div id="br"></div>
</body>
</html>
